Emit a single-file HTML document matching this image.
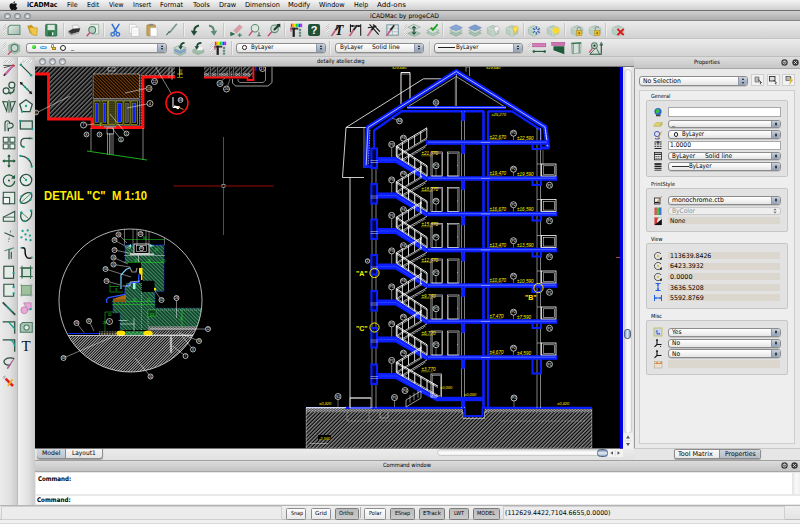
<!DOCTYPE html>
<html><head><meta charset="utf-8"><title>iCADMac</title>
<style>
*{box-sizing:border-box;margin:0;padding:0}
html,body{width:800px;height:524px;overflow:hidden;background:#e6e6e6;font-family:"Liberation Sans","DejaVu Sans",sans-serif;}
.abs{position:absolute}
.t{position:absolute;white-space:nowrap;color:#000;line-height:1}
#menubar{left:0;top:0;width:800px;height:11px;background:linear-gradient(#f4f4f4,#e2e2e2 50%,#cfcfcf);border-bottom:1px solid #6e6e6e}
#titlebar{left:0;top:11px;width:800px;height:10px;background:linear-gradient(#cfcfcf,#adadad);border-bottom:1px solid #858585}
.tb{left:0;width:800px;background:linear-gradient(#ececec,#dcdcdc 60%,#d2d2d2);}
.light{position:absolute;width:6.600px;height:6.600px;border-radius:50%;background:radial-gradient(circle at 50% 75%,#f4f6f8,#b9bfc6 60%,#8f959c);border:0.5px solid #80868d}
.combo{position:absolute;height:9px;border-radius:3px;background:linear-gradient(#fff,#f3f3f3 50%,#e4e4e4);border:0.5px solid #8c8c8c;box-shadow:0 0.5px 0.5px rgba(0,0,0,.25)}
.stepper{position:absolute;right:0;top:0;bottom:0;width:9px;border-radius:0 3px 3px 0;background:linear-gradient(#c9d1dd,#a9b6c8 50%,#93a3ba);border-left:0.4px solid #8d98a8;}
.stepper:before{content:"";position:absolute;left:3px;top:1.5px;border:1.5px solid transparent;border-bottom:2px solid #111;border-top:0}
.stepper:after{content:"";position:absolute;left:3px;bottom:1.5px;border:1.5px solid transparent;border-top:2px solid #111;border-bottom:0}
.sep{position:absolute;width:0.7px;background:#c6c6c6;box-shadow:0.7px 0 0 #f4f4f4}
.grip{position:absolute;width:3px;background:repeating-linear-gradient(135deg,#c4c4c4 0 0.7px,#ececec 0.7px 1.6px)}
.field{position:absolute;background:#dbd7cf;height:7px}
.wfield{position:absolute;background:#fff;height:8px;border:0.5px solid #a8a8a8}
.group{position:absolute;border:0.5px solid #c6c6c6;background:#e2e2e2;border-radius:2px}
.btn{position:absolute;height:12px;top:507.5px;border:0.5px solid #8e8e8e;border-radius:1.5px;background:linear-gradient(#fdfdfd,#e9e9e9);font-size:5.6px;text-align:center;line-height:10.5px;color:#111}
.btn.on{background:linear-gradient(#bcbcbc,#cacaca);border-color:#7c7c7c}
</style></head>
<body>
<div id="menubar" class="abs"></div>
<svg class="abs" style="left:9px;top:0.5px" width="9" height="10" viewBox="0 0 18 20"><path d="M12.2 0.3c0.2 1.9-1.6 4.1-3.6 3.9C8.300 2.300 10.200 0.500 12.200 0.300zM9 5.300c1 0 2-0.900 3.700-0.800 1.300 0.100 2.700 0.700 3.600 2-3 1.800-2.500 6 0.600 7.200-0.700 1.800-2.300 4.600-4.200 4.600-1.200 0-1.800-0.800-3.300-0.800-1.600 0-2.100 0.800-3.300 0.800C3.800 18.300 1 13.200 1 9.800c0-3.400 2.200-5.300 4.300-5.300 1.500 0 2.600 0.800 3.700 0.800z" fill="#111"/></svg>
<span class="t " style="left:27px;top:2.2px;font-size:6.85px;transform:scaleX(0.901);transform-origin:0 0;font-family:'DejaVu Sans','Liberation Sans',sans-serif;font-weight:bold;">iCADMac</span>
<span class="t " style="left:66.8px;top:2.2px;font-size:6.85px;transform:scaleX(0.934);transform-origin:0 0;font-family:'DejaVu Sans','Liberation Sans',sans-serif;">File</span>
<span class="t " style="left:86.8px;top:2.2px;font-size:6.85px;transform:scaleX(0.920);transform-origin:0 0;font-family:'DejaVu Sans','Liberation Sans',sans-serif;">Edit</span>
<span class="t " style="left:108.8px;top:2.2px;font-size:6.85px;transform:scaleX(0.892);transform-origin:0 0;font-family:'DejaVu Sans','Liberation Sans',sans-serif;">View</span>
<span class="t " style="left:132.5px;top:2.2px;font-size:6.85px;transform:scaleX(0.932);transform-origin:0 0;font-family:'DejaVu Sans','Liberation Sans',sans-serif;">Insert</span>
<span class="t " style="left:160px;top:2.2px;font-size:6.85px;transform:scaleX(0.953);transform-origin:0 0;font-family:'DejaVu Sans','Liberation Sans',sans-serif;">Format</span>
<span class="t " style="left:192.5px;top:2.2px;font-size:6.85px;transform:scaleX(0.996);transform-origin:0 0;font-family:'DejaVu Sans','Liberation Sans',sans-serif;">Tools</span>
<span class="t " style="left:218.8px;top:2.2px;font-size:6.85px;transform:scaleX(0.951);transform-origin:0 0;font-family:'DejaVu Sans','Liberation Sans',sans-serif;">Draw</span>
<span class="t " style="left:244.5px;top:2.2px;font-size:6.85px;transform:scaleX(0.956);transform-origin:0 0;font-family:'DejaVu Sans','Liberation Sans',sans-serif;">Dimension</span>
<span class="t " style="left:288.3px;top:2.2px;font-size:6.85px;transform:scaleX(0.979);transform-origin:0 0;font-family:'DejaVu Sans','Liberation Sans',sans-serif;">Modify</span>
<span class="t " style="left:319.3px;top:2.2px;font-size:6.85px;transform:scaleX(0.952);transform-origin:0 0;font-family:'DejaVu Sans','Liberation Sans',sans-serif;">Window</span>
<span class="t " style="left:353.8px;top:2.2px;font-size:6.85px;transform:scaleX(0.910);transform-origin:0 0;font-family:'DejaVu Sans','Liberation Sans',sans-serif;">Help</span>
<span class="t " style="left:377px;top:2.2px;font-size:6.85px;transform:scaleX(1.031);transform-origin:0 0;font-family:'DejaVu Sans','Liberation Sans',sans-serif;">Add-ons</span>
<div id="titlebar" class="abs"></div>
<div class="light" style="left:4.2px;top:12.6px"></div>
<div class="light" style="left:14.1px;top:12.6px"></div>
<div class="light" style="left:24px;top:12.6px"></div>
<span class="t " style="left:370px;top:12.9px;font-size:6.3px;transform:scaleX(0.965);transform-origin:0 0;font-family:'DejaVu Sans','Liberation Sans',sans-serif">iCADMac by progeCAD</span>
<div class="abs tb" style="top:21px;height:18px;border-bottom:1px solid #c2c2c2"></div>
<div class="abs tb" style="top:39px;height:17.500px;border-bottom:1px solid #bdbdbd"></div>
<svg class="abs" style="left:5.8px;top:21.8px" width="16.0" height="16.0" viewBox="0 0 14 14"><defs><linearGradient id="gn" x1="0" y1="0" x2="1" y2="1"><stop offset="0" stop-color="#e4ede8"/><stop offset="1" stop-color="#9fb9ab"/></linearGradient></defs><path d="M3.800 2.800H12.200V11H1.800V4.800z" fill="url(#gn)" stroke="#5d8a73" stroke-width="0.9" stroke-linejoin="round"/></svg>
<svg class="abs" style="left:24.5px;top:21.8px" width="16.0" height="16.0" viewBox="0 0 14 14"><path d="M2 3.500L5.500 2.500L7 4L8 10.500L4.300 9.800z" fill="#c99a22"/><path d="M3.300 4.500L10.800 5.200L10.300 12L6 11z" fill="#f0c64a" stroke="#b98d1e" stroke-width="0.5"/><path d="M3.300 4.500L2.800 3.200" stroke="#b98d1e" stroke-width=".6"/></svg>
<svg class="abs" style="left:43.2px;top:21.8px" width="16.0" height="16.0" viewBox="0 0 14 14"><rect x="2.300" y="2" width="9.800" height="10.300" rx="0.8" fill="#3f8a5c" stroke="#1f5a3a" stroke-width="0.6"/><rect x="4" y="2.500" width="6.300" height="4.500" fill="#d9e7de"/><rect x="4.500" y="8.300" width="5" height="4" fill="#2a6a46"/><rect x="7.800" y="9" width="1.300" height="2.600" fill="#dfe"/></svg>
<svg class="abs" style="left:66.0px;top:21.8px" width="16.0" height="16.0" viewBox="0 0 14 14"><path d="M5.500 3L10.500 2.500L12 5.500L6 6.500z" fill="#f4f4f4" stroke="#999" stroke-width="0.4"/><path d="M2 8L6 6L12.500 5.500L11.500 8.500L5 10.500z" fill="#333"/><path d="M2 8L5 10.500L5 11.800L2 9.300z" fill="#777"/><path d="M5 10.500L11.500 8.500L11.500 9.800L5 11.800z" fill="#aaa"/></svg>
<svg class="abs" style="left:84.6px;top:21.8px" width="16.0" height="16.0" viewBox="0 0 14 14"><path d="M4.500 2H12V10.500H6" fill="#e8efe9" stroke="#8aa898" stroke-width="0.7"/><circle cx="6.300" cy="7" r="3" fill="#b7d0c0" stroke="#4d7a63" stroke-width="0.9"/><path d="M4.200 9.300L1.800 12" stroke="#c0507a" stroke-width="1.300" stroke-linecap="round"/></svg>
<svg class="abs" style="left:107.4px;top:21.8px" width="16.0" height="16.0" viewBox="0 0 14 14"><path d="M4.500 2L8.500 9M10.500 2L6 9" stroke="#2d6fd0" stroke-width="1.300" stroke-linecap="round"/><circle cx="5" cy="10.800" r="1.600" fill="none" stroke="#2d6fd0" stroke-width="1.100"/><circle cx="9.500" cy="10.800" r="1.600" fill="none" stroke="#2d6fd0" stroke-width="1.100"/></svg>
<svg class="abs" style="left:126.0px;top:21.8px" width="16.0" height="16.0" viewBox="0 0 14 14"><path d="M3 2H8L9 3V10H3z" fill="#fbfbfb" stroke="#b5b5b5" stroke-width="0.5"/><path d="M5 4.500H10.200L11.300 5.600V12.500H5z" fill="#fff" stroke="#b5b5b5" stroke-width="0.5"/><path d="M6 7H10M6 8.500H10M6 10H10" stroke="#dde4ee" stroke-width=".5"/></svg>
<svg class="abs" style="left:144.3px;top:21.8px" width="16.0" height="16.0" viewBox="0 0 14 14"><rect x="2.500" y="2.500" width="7.500" height="9.500" rx="0.6" fill="#c9a24e" stroke="#9b7a2e" stroke-width="0.5"/><rect x="4.500" y="1.600" width="3.500" height="1.800" fill="#8a8a8a"/><path d="M5.500 5H10.500L11.500 6V12.500H5.500z" fill="#fff" stroke="#b5b5b5" stroke-width="0.5"/></svg>
<svg class="abs" style="left:163.0px;top:21.8px" width="16.0" height="16.0" viewBox="0 0 14 14"><path d="M11.800 2L6 9" stroke="#7a9a88" stroke-width="1.500" stroke-linecap="round"/><path d="M6.300 8.300L3 12L2.800 11L5.300 7.800z" fill="#3f6a53"/></svg>
<svg class="abs" style="left:186.5px;top:21.8px" width="16.0" height="16.0" viewBox="0 0 14 14"><g><path d="M10.500 3C7.500 3.500 6 6 6.300 9" fill="none" stroke="#1f4a36" stroke-width="1.800"/><path d="M3.300 7.500L9 8L6 12z" fill="#1f4a36"/></g></svg>
<svg class="abs" style="left:205.0px;top:21.8px" width="16.0" height="16.0" viewBox="0 0 14 14"><g transform="translate(14 0) scale(-1 1)"><path d="M10.500 3C7.500 3.500 6 6 6.300 9" fill="none" stroke="#5d8a73" stroke-width="1.800"/><path d="M3.300 7.500L9 8L6 12z" fill="#5d8a73"/></g></svg>
<svg class="abs" style="left:228.0px;top:21.8px" width="16.0" height="16.0" viewBox="0 0 14 14"><path d="M5 7.500L10 2.500L12.500 4.500L7.500 9.800z" fill="#d9a0a8" stroke="#c08890" stroke-width="0.4"/><path d="M2 8.500L6.500 10.500L2 12.500z" fill="#2a6a46"/><path d="M8.500 11.500H12M10.200 9.800V13.200" stroke="#3f8a5c" stroke-width="1.100"/></svg>
<svg class="abs" style="left:247.0px;top:21.8px" width="16.0" height="16.0" viewBox="0 0 14 14"><circle cx="7" cy="5.500" r="3.300" fill="#dbe8e0" stroke="#5d8a73" stroke-width="0.9"/><path d="M4.700 8L2 11.500" stroke="#c0507a" stroke-width="1.300" stroke-linecap="round"/><path d="M10.500 9V12M9 12H12" stroke="#3f6a53" stroke-width="0.9"/></svg>
<svg class="abs" style="left:265.6px;top:21.8px" width="16.0" height="16.0" viewBox="0 0 14 14"><circle cx="7.500" cy="6" r="3.300" fill="#c8dad0" stroke="#5d8a73" stroke-width="0.9"/><path d="M5 8.500L2 12" stroke="#c0507a" stroke-width="1.300" stroke-linecap="round"/><path d="M7 7L11.500 2.500" stroke="#1f3a2c" stroke-width="1.800"/><path d="M12.500 1.500L12.500 5L9 2z" fill="#1f3a2c"/></svg>
<svg class="abs" style="left:287.5px;top:21.8px" width="16.0" height="16.0" viewBox="0 0 14 14"><rect x="2.5" y="1.500" width="1.500" height="3" fill="#ff2020"/><rect x="3.9" y="1.500" width="1.500" height="3" fill="#ffb000"/><rect x="5.3" y="1.500" width="1.500" height="3" fill="#f0f000"/><rect x="6.7" y="1.500" width="1.500" height="3" fill="#20d020"/><rect x="8.1" y="1.500" width="1.500" height="3" fill="#20c0f0"/><rect x="9.5" y="1.500" width="1.500" height="3" fill="#3030ff"/><rect x="10.9" y="1.500" width="1.500" height="3" fill="#c020e0"/><rect x="2" y="5" width="7" height="1.600" fill="#333"/><rect x="4" y="5" width="2" height="8" fill="#222"/><rect x="2" y="5" width="1.200" height="3.500" fill="#c06080"/><rect x="9.500" y="6" width="2" height="1.800" fill="#5d8a73"/><rect x="9.500" y="8.500" width="2" height="1.800" fill="#5d8a73"/><rect x="9.500" y="11" width="2" height="1.800" fill="#5d8a73"/></svg>
<svg class="abs" style="left:306.0px;top:21.8px" width="16.0" height="16.0" viewBox="0 0 14 14"><rect x="1.800" y="1.800" width="10.500" height="10.500" rx="1.800" fill="#1f5238"/><text x="7" y="10.800" font-size="9.500" font-weight="bold" fill="#fff" text-anchor="middle" font-family="Liberation Sans, sans-serif">?</text></svg>
<svg class="abs" style="left:329.0px;top:21.8px" width="16.0" height="16.0" viewBox="0 0 14 14"><text x="9" y="11.500" font-size="12" font-style="italic" font-weight="bold" fill="#111" text-anchor="middle" font-family="Liberation Serif, serif">T</text><path d="M1.500 12L5 6.500L6.500 7.500L3 12.500z" fill="#c06088"/><path d="M5 6.500L8.500 2.500L9.500 3.300L6.500 7.500z" fill="#222"/></svg>
<svg class="abs" style="left:347.0px;top:21.8px" width="16.0" height="16.0" viewBox="0 0 14 14"><path d="M3 2V9M12 2V12M3 3.500H12" stroke="#111" stroke-width="0.9" fill="none"/><path d="M3 3.500L5.500 2.500V4.500zM12 3.500L9.500 2.500V4.500z" fill="#111"/><path d="M1.500 12L5 6.500L6.500 7.500L3 12.500z" fill="#c06088"/><path d="M5 6.500L8.500 2.500L9.500 3.300L6.500 7.500z" fill="#222"/></svg>
<svg class="abs" style="left:365.0px;top:21.8px" width="16.0" height="16.0" viewBox="0 0 14 14"><path d="M4 2L12 11M7 2L13 8.500M2.500 5L10 4" stroke="#111" stroke-width="0.9"/><path d="M1.500 12L5 6.500L6.500 7.500L3 12.500z" fill="#c06088"/><path d="M5 6.500L8.500 2.500L9.500 3.300L6.500 7.500z" fill="#222"/></svg>
<svg class="abs" style="left:383.5px;top:21.8px" width="16.0" height="16.0" viewBox="0 0 14 14"><rect x="2.500" y="2.500" width="10" height="9" fill="#e3ebe6" stroke="#6d8a9a" stroke-width="0.8"/><path d="M2.500 5.500H12.500M2.500 8.500H12.500M7.500 5.500V11.500" stroke="#9ab" stroke-width=".5"/><path d="M1.500 12L5 6.500L6.500 7.500L3 12.500z" fill="#c06088"/><path d="M5 6.500L8.500 2.500L9.500 3.300L6.500 7.500z" fill="#222"/></svg>
<svg class="abs" style="left:406.0px;top:21.8px" width="16.0" height="16.0" viewBox="0 0 14 14"><path d="M7 1.9L12.500 4.5L7 7.1L1.500 4.5z" fill="#c9dbd0" stroke="#7fa08f" stroke-width="0.5" opacity="1"/><path d="M7 7.4L12.500 10L7 12.6L1.500 10z" fill="#a9c4b5" stroke="#7fa08f" stroke-width="0.5" opacity="1"/><path d="M7 4V10.500M5.500 5.500L7 4L8.500 5.500M5.500 9L7 10.500L8.500 9" stroke="#1f4a36" stroke-width="0.9" fill="none"/></svg>
<svg class="abs" style="left:425.0px;top:21.8px" width="16.0" height="16.0" viewBox="0 0 14 14"><path d="M7 6.9L12.500 9.5L7 12.1L1.500 9.5z" fill="#b9cfc2" stroke="#7fa08f" stroke-width="0.5" opacity="1"/><path d="M7 4.9L12.500 7.5L7 10.1L1.500 7.5z" fill="#d5e3da" stroke="#7fa08f" stroke-width="0.5" opacity="1"/><path d="M5 5L7 7L11 2" stroke="#18a018" stroke-width="1.600" fill="none"/></svg>
<svg class="abs" style="left:448.0px;top:21.8px" width="16.0" height="16.0" viewBox="0 0 14 14"><path d="M7 7.200000000000001L12.500 9.8L7 12.4L1.500 9.8z" fill="#a9c4b5" stroke="#7fa08f" stroke-width="0.5" opacity="1"/><path d="M7 4.9L12.500 7.5L7 10.1L1.500 7.5z" fill="#c9dbd0" stroke="#7fa08f" stroke-width="0.5" opacity="1"/><path d="M7 2.4L12.500 5L7 7.6L1.500 5z" fill="#8aa6d8" stroke="#6080c0" stroke-width="0.5" opacity="1"/></svg>
<svg class="abs" style="left:466.5px;top:21.8px" width="16.0" height="16.0" viewBox="0 0 14 14"><path d="M7 7.200000000000001L12.500 9.8L7 12.4L1.500 9.8z" fill="#a9c4b5" stroke="#7fa08f" stroke-width="0.5" opacity="1"/><path d="M7 4.9L12.500 7.5L7 10.1L1.500 7.5z" fill="#c9dbd0" stroke="#7fa08f" stroke-width="0.5" opacity="1"/><path d="M7 2.4L12.500 5L7 7.6L1.500 5z" fill="#7f9ccf" stroke="#6080c0" stroke-width="0.5" opacity="1"/></svg>
<svg class="abs" style="left:485.0px;top:21.8px" width="16.0" height="16.0" viewBox="0 0 14 14"><path d="M2 5L7 3L12 5V10L7 12.500L2 10z" fill="#b9cfc2" stroke="#8fae9e" stroke-width="0.4"/><path d="M2 5L7 7L12 5M7 7V12.500" stroke="#dfeae4" stroke-width="0.5" fill="none"/><path d="M8.500 4.500a2.200 2.200 0 1 1 2 3.500v2h-1.600v-2a2.200 2.200 0 0 1-.4-3.500z" fill="#f2f2f2" stroke="#999" stroke-width="0.4"/></svg>
<svg class="abs" style="left:503.5px;top:21.8px" width="16.0" height="16.0" viewBox="0 0 14 14"><path d="M2 5L7 3L12 5V10L7 12.500L2 10z" fill="#b9cfc2" stroke="#8fae9e" stroke-width="0.4"/><path d="M2 5L7 7L12 5M7 7V12.500" stroke="#dfeae4" stroke-width="0.5" fill="none"/><path d="M8.500 4.500a2.200 2.200 0 1 1 2 3.500v2h-1.600v-2a2.200 2.200 0 0 1-.4-3.500z" fill="#ffe24a" stroke="#c9a21e" stroke-width="0.4"/></svg>
<svg class="abs" style="left:526.0px;top:21.8px" width="16.0" height="16.0" viewBox="0 0 14 14"><path d="M2 5L7 3L12 5V10L7 12.500L2 10z" fill="#b9cfc2" stroke="#8fae9e" stroke-width="0.4"/><path d="M2 5L7 7L12 5M7 7V12.500" stroke="#dfeae4" stroke-width="0.5" fill="none"/><path d="M9 4V11M6 5.700L12 9.300M12 5.700L6 9.300" stroke="#2a50b0" stroke-width="0.9"/><circle cx="9" cy="7.500" r="1.200" fill="#dfe8ff"/></svg>
<svg class="abs" style="left:545.0px;top:21.8px" width="16.0" height="16.0" viewBox="0 0 14 14"><path d="M2 5L7 3L12 5V10L7 12.500L2 10z" fill="#b9cfc2" stroke="#8fae9e" stroke-width="0.4"/><path d="M2 5L7 7L12 5M7 7V12.500" stroke="#dfeae4" stroke-width="0.5" fill="none"/><circle cx="9.500" cy="7.500" r="2.600" fill="#ffd92a"/><path d="M9.500 3.500V11.500M5.500 7.500H13.500M6.700 4.700L12.300 10.300M12.300 4.700L6.700 10.300" stroke="#ffd92a" stroke-width="0.7"/></svg>
<svg class="abs" style="left:568.5px;top:21.8px" width="16.0" height="16.0" viewBox="0 0 14 14"><path d="M2 5L7 3L12 5V10L7 12.500L2 10z" fill="#b9cfc2" stroke="#8fae9e" stroke-width="0.4"/><path d="M2 5L7 7L12 5M7 7V12.500" stroke="#dfeae4" stroke-width="0.5" fill="none"/><path d="M7.300 7.500V6a1.500 1.500 0 0 1 3 0V7.500" fill="none" stroke="#8a8a8a" stroke-width="0.8"/><rect x="6.500" y="7.500" width="4.800" height="4.300" fill="#e9b92a" stroke="#a8861c" stroke-width="0.4"/><rect x="8.400" y="9" width="1" height="1.500" fill="#6a4a00"/></svg>
<svg class="abs" style="left:587.0px;top:21.8px" width="16.0" height="16.0" viewBox="0 0 14 14"><path d="M2 5L7 3L12 5V10L7 12.500L2 10z" fill="#b9cfc2" stroke="#8fae9e" stroke-width="0.4"/><path d="M2 5L7 7L12 5M7 7V12.500" stroke="#dfeae4" stroke-width="0.5" fill="none"/><path d="M7.300 7.500V5.500a1.500 1.500 0 0 1 3 0" fill="none" stroke="#8a8a8a" stroke-width="0.8"/><rect x="6.500" y="7.500" width="4.800" height="4.300" fill="#e9b92a" stroke="#a8861c" stroke-width="0.4"/><rect x="8.400" y="9" width="1" height="1.500" fill="#6a4a00"/></svg>
<svg class="abs" style="left:610.0px;top:21.8px" width="16.0" height="16.0" viewBox="0 0 14 14"><path d="M2 5L7 3L12 5V10L7 12.500L2 10z" fill="#b9cfc2" stroke="#8fae9e" stroke-width="0.4"/><path d="M2 5L7 7L12 5M7 7V12.500" stroke="#dfeae4" stroke-width="0.5" fill="none"/><path d="M6.500 6L12 11.500M12 6L6.500 11.500" stroke="#e01818" stroke-width="1.800"/></svg>
<svg class="abs" style="left:5.8px;top:39.6px" width="16.0" height="16.0" viewBox="0 0 14 14"><path d="M2.500 4.500L7.500 2.500L12 4.500V10L7.500 12L2.500 10z" fill="#a9c4b5" stroke="#7fa08f" stroke-width="0.5"/><circle cx="7.500" cy="7" r="3" fill="#c9dbd0" stroke="#4d7a63" stroke-width="0.9"/><path d="M5.200 9.300L2 12.500" stroke="#c0507a" stroke-width="1.200" stroke-linecap="round"/></svg>
<svg class="abs" style="left:171.6px;top:39.6px" width="16.0" height="16.0" viewBox="0 0 14 14"><path d="M7 8.4L12.500 11L7 13.6L1.500 11z" fill="#a9c4b5" stroke="#7fa08f" stroke-width="0.5" opacity="1"/><path d="M7 6.4L12.500 9L7 11.6L1.500 9z" fill="#8aa6d8" stroke="#6080c0" stroke-width="0.5" opacity="1"/><path d="M7 4.4L12.500 7L7 9.6L1.500 7z" fill="#c9dbd0" stroke="#7fa08f" stroke-width="0.5" opacity="1"/><path d="M11 2.500C8.500 2.500 7.500 4 7.500 6.500" fill="none" stroke="#1f4a36" stroke-width="1.500"/><path d="M5.500 5.500L9.500 5.500L7.500 8.500z" fill="#1f4a36"/></svg>
<svg class="abs" style="left:190.3px;top:39.6px" width="16.0" height="16.0" viewBox="0 0 14 14"><path d="M2.500 8.500L7 7L12 8.500V11L7 12.800L2.500 11z" fill="#9fbcab" stroke="#7fa08f" stroke-width="0.4"/><path d="M6 6H11V9H6z" fill="#f4f4f4"/><path d="M10 2.500C7.500 2.500 6 4 6 6.500" fill="none" stroke="#1f4a36" stroke-width="1.500"/><path d="M4 5.500L8 5.500L6 8.500z" fill="#1f4a36"/></svg>
<svg class="abs" style="left:212.0px;top:39.6px" width="16.0" height="16.0" viewBox="0 0 14 14"><rect x="2.5" y="1.500" width="1.500" height="3" fill="#ff2020"/><rect x="3.9" y="1.500" width="1.500" height="3" fill="#ffb000"/><rect x="5.3" y="1.500" width="1.500" height="3" fill="#f0f000"/><rect x="6.7" y="1.500" width="1.500" height="3" fill="#20d020"/><rect x="8.1" y="1.500" width="1.500" height="3" fill="#20c0f0"/><rect x="9.5" y="1.500" width="1.500" height="3" fill="#3030ff"/><rect x="10.9" y="1.500" width="1.500" height="3" fill="#c020e0"/><rect x="2" y="5" width="7" height="1.600" fill="#333"/><rect x="4" y="5" width="2" height="8" fill="#222"/><rect x="2" y="5" width="1.200" height="3.500" fill="#c06080"/><rect x="9.500" y="6" width="2" height="1.800" fill="#5d8a73"/><rect x="9.500" y="8.500" width="2" height="1.800" fill="#5d8a73"/><rect x="9.500" y="11" width="2" height="1.800" fill="#5d8a73"/></svg>
<svg class="abs" style="left:531.0px;top:39.6px" width="16.0" height="16.0" viewBox="0 0 14 14"><rect x="1.500" y="3" width="11.500" height="3" fill="#d070b0" stroke="#a04888" stroke-width="0.4"/><path d="M2 4.500H12.500" stroke="#f0c0e0" stroke-width=".5" stroke-dasharray="1 .6"/><path d="M2.500 10H12" stroke="#1f5a3a" stroke-width="1"/><circle cx="2.500" cy="10" r="1.100" fill="#1f5a3a"/><circle cx="12" cy="10" r="1.100" fill="#1f5a3a"/></svg>
<svg class="abs" style="left:550.0px;top:39.6px" width="16.0" height="16.0" viewBox="0 0 14 14"><rect x="1.500" y="2" width="11.500" height="2.800" fill="#d070b0" stroke="#a04888" stroke-width="0.4"/><path d="M3 5.500H12.500V12.500L3 9z" fill="#1f5a3a"/></svg>
<svg class="abs" style="left:567.7px;top:39.6px" width="16.0" height="16.0" viewBox="0 0 14 14"><path d="M3 3L11.500 2.500L11 11.500L3.500 12z" fill="#d5e0da" stroke="#7fa08f" stroke-width="0.6"/><path d="M4.500 3V12M9.800 2.800V11.500" stroke="#4d7a63" stroke-width=".8"/><path d="M3 3L11.500 2.500" stroke="#2a6a46" stroke-width="1.200"/></svg>
<svg class="abs" style="left:586.5px;top:39.6px" width="16.0" height="16.0" viewBox="0 0 14 14"><path d="M2.500 12.500H12.500V3.500" fill="none" stroke="#1f5a3a" stroke-width="1"/><path d="M12.500 2L11.300 4.500H13.700zM2.500 12.500L8 6.500L11 12.500" stroke="#1f5a3a" stroke-width=".7" fill="none"/><circle cx="6.500" cy="5" r="2.500" fill="#c9dbd0" stroke="#4d7a63" stroke-width=".9"/><circle cx="6.500" cy="5" r="1" fill="#1f3a2c"/><path d="M4.800 7L2 11" stroke="#c0507a" stroke-width="1.100"/></svg>
<div class="sep" style="left:62.6px;top:23px;height:14px"></div>
<div class="sep" style="left:103.3px;top:23px;height:14px"></div>
<div class="sep" style="left:183px;top:23px;height:14px"></div>
<div class="sep" style="left:223px;top:23px;height:14px"></div>
<div class="sep" style="left:284px;top:23px;height:14px"></div>
<div class="sep" style="left:441.6px;top:23px;height:14px"></div>
<div class="sep" style="left:523px;top:23px;height:14px"></div>
<div class="sep" style="left:564px;top:23px;height:14px"></div>
<div class="sep" style="left:605px;top:23px;height:14px"></div>
<div class="sep" style="left:231px;top:41px;height:14px"></div>
<div class="sep" style="left:328.5px;top:41px;height:14px"></div>
<div class="sep" style="left:429px;top:41px;height:14px"></div>
<div class="grip" style="left:2.5px;top:24px;height:12px"></div>
<div class="grip" style="left:325.5px;top:24px;height:12px"></div>
<div class="grip" style="left:403.5px;top:24px;height:12px"></div>
<div class="grip" style="left:2.5px;top:42px;height:12px"></div>
<div class="grip" style="left:210px;top:42px;height:12px"></div>
<div class="grip" style="left:528px;top:42px;height:12px"></div>
<div class="combo" style="left:25.8px;top:42.8px;width:141.7px;height:10px"><div class="stepper"></div></div>
<div class="combo" style="left:236px;top:42.8px;width:90px;height:10px"><div class="stepper"></div></div>
<div class="combo" style="left:335.4px;top:42.8px;width:88.6px;height:10px"><div class="stepper"></div></div>
<div class="combo" style="left:434px;top:42.8px;width:89px;height:10px"><div class="stepper"></div></div>
<div class="abs" style="left:31.5px;top:45.3px;width:4px;height:4px;border-radius:50%;background:radial-gradient(circle at 40% 35%,#7dff6a,#17c010 60%,#0a8a06)"></div>
<div class="abs" style="left:40px;top:46px;width:7px;height:3.2px;border-radius:50%;border:0.8px solid #4aa3e8;background:#d9eefc"></div>
<div class="abs" style="left:52px;top:46.5px;width:4px;height:3.300px;background:#e8c23c;border:0.4px solid #a8861c"></div><div class="abs" style="left:50.5px;top:44.3px;width:3.500px;height:3.500px;border:0.7px solid #8a8a8a;border-bottom:0;border-radius:2px 2px 0 0"></div>
<div class="abs" style="left:59.5px;top:44.5px;width:6px;height:6px;border-radius:50%;border:0.8px solid #222;background:#fff"></div>
<span class="t " style="left:71px;top:43.6px;font-size:6px;font-family:'DejaVu Sans','Liberation Sans',sans-serif">_</span>
<div class="abs" style="left:242px;top:45px;width:4.500px;height:4.500px;border-radius:50%;border:0.6px solid #222;background:#fff"></div>
<span class="t " style="left:250.9px;top:44px;font-size:6.3px;transform:scaleX(0.875);transform-origin:0 0;font-family:'DejaVu Sans','Liberation Sans',sans-serif">ByLayer</span>
<span class="t " style="left:339.5px;top:44px;font-size:6.3px;transform:scaleX(0.898);transform-origin:0 0;font-family:'DejaVu Sans','Liberation Sans',sans-serif">ByLayer</span>
<span class="t " style="left:372.3px;top:44px;font-size:6.3px;transform:scaleX(0.968);transform-origin:0 0;font-family:'DejaVu Sans','Liberation Sans',sans-serif">Solid line</span>
<div class="abs" style="left:438px;top:47.2px;width:17px;height:0.7px;background:#222"></div>
<span class="t " style="left:455.8px;top:44px;font-size:6.3px;transform:scaleX(0.875);transform-origin:0 0;font-family:'DejaVu Sans','Liberation Sans',sans-serif">ByLayer</span>
<div class="abs" style="left:0;top:56.5px;width:17.500px;height:449px;background:linear-gradient(90deg,#ebebeb,#e1e1e1 55%,#c8c8c8)"></div>
<div class="abs" style="left:17.500px;top:56.5px;width:17.500px;height:449px;background:linear-gradient(90deg,#f2f2f2,#e3e3e3 55%,#cbcbcb)"></div>
<div class="abs" style="left:17px;top:56.5px;width:0.7px;height:449px;background:#bcbcbc"></div>
<div class="abs" style="left:3px;top:59.5px;width:11px;height:3px;background:repeating-linear-gradient(135deg,#c8c8c8 0 0.7px,#eee 0.7px 1.700px)"></div>
<div class="abs" style="left:21px;top:59.5px;width:11px;height:3px;background:repeating-linear-gradient(135deg,#c8c8c8 0 0.7px,#eee 0.7px 1.700px)"></div>
<svg class="abs" style="left:0.7px;top:61.6px" width="16.0" height="16.0" viewBox="0 0 14 14"><path d="M2 3H12M2.500 5L8 3.500" stroke="#333" stroke-width=".7"/><path d="M11.500 3L4 11.500L2.500 12L3 10.500L10.500 2.300z" fill="#d868b0" stroke="#7a3a68" stroke-width=".4"/><path d="M10 2.500L11.800 3.800" stroke="#e03030" stroke-width="1.200"/><path d="M2.500 12L3.800 10.300" stroke="#222" stroke-width="1"/></svg>
<svg class="abs" style="left:0.7px;top:80.0px" width="16.0" height="16.0" viewBox="0 0 14 14"><circle cx="4.500" cy="9.500" r="2.600" fill="#e4ece7" stroke="#2f4f40" stroke-width="1"/><circle cx="9.500" cy="4.500" r="2.600" fill="#e4ece7" stroke="#2f4f40" stroke-width="1"/><path d="M11.500 7.500C11.500 10.500 9.500 11.500 7.500 11.500" fill="none" stroke="#1f5a3a" stroke-width="1.200"/><path d="M6.500 11.500L8.500 10V13z" fill="#1f5a3a"/></svg>
<svg class="abs" style="left:0.7px;top:98.3px" width="16.0" height="16.0" viewBox="0 0 14 14"><path d="M1.500 3L6 3.500L5 11.500zM12.500 3L8 3.500L9 11.500z" fill="#d5e0da" stroke="#2f4f40" stroke-width=".9"/><path d="M7 1.500V13" stroke="#5d8a73" stroke-width="1.200"/></svg>
<svg class="abs" style="left:0.7px;top:116.7px" width="16.0" height="16.0" viewBox="0 0 14 14"><path d="M3.500 12.500V5.500C3.500 2.500 7.500 2.500 7.500 5.500C10.500 4.500 12 8.500 9 9.500C8 10 7.500 10 6.500 10V12.500" fill="#d5e0da" stroke="#2f4f40" stroke-width="1"/><path d="M5.500 12V6C5.500 5 6.500 5 6.500 6" fill="none" stroke="#5d8a73" stroke-width=".6"/></svg>
<svg class="abs" style="left:0.7px;top:135.0px" width="16.0" height="16.0" viewBox="0 0 14 14"><rect x="2" y="2" width="4.300" height="4.300" fill="#eef3f0" stroke="#2f4f40" stroke-width=".9"/><rect x="2" y="7.8" width="4.300" height="4.300" fill="#eef3f0" stroke="#2f4f40" stroke-width=".9"/><rect x="7.8" y="2" width="4.300" height="4.300" fill="#eef3f0" stroke="#2f4f40" stroke-width=".9"/><rect x="7.8" y="7.8" width="4.300" height="4.300" fill="#eef3f0" stroke="#2f4f40" stroke-width=".9"/></svg>
<svg class="abs" style="left:0.7px;top:153.4px" width="16.0" height="16.0" viewBox="0 0 14 14"><path d="M7 2V12M2 7H12" stroke="#1f5a3a" stroke-width="1.100"/><path d="M7 1L5.500 3.200H8.500zM7 13L5.500 10.800H8.500zM1 7L3.200 5.500V8.500zM13 7L10.800 5.500V8.500z" fill="#1f5a3a"/></svg>
<svg class="abs" style="left:0.7px;top:171.7px" width="16.0" height="16.0" viewBox="0 0 14 14"><path d="M11 4.500A5 5 0 1 0 12 8" fill="none" stroke="#1f5a3a" stroke-width="1.100"/><path d="M12.300 2.500V6H8.800z" fill="#1f5a3a"/><circle cx="7" cy="7.500" r=".9" fill="#1f5a3a"/></svg>
<svg class="abs" style="left:0.7px;top:190.1px" width="16.0" height="16.0" viewBox="0 0 14 14"><rect x="2" y="2" width="10" height="10" fill="#e4ece7" stroke="#2f4f40" stroke-width=".9"/><rect x="2" y="6.500" width="5.500" height="5.500" fill="#f6f8f7" stroke="#2f4f40" stroke-width=".9"/></svg>
<svg class="abs" style="left:0.7px;top:208.4px" width="16.0" height="16.0" viewBox="0 0 14 14"><path d="M2 8L12 3V11.500H2z" fill="#e4ece7" stroke="#2f4f40" stroke-width=".9"/><path d="M2 8H12" stroke="#2f4f40" stroke-width=".7"/></svg>
<svg class="abs" style="left:0.7px;top:226.8px" width="16.0" height="16.0" viewBox="0 0 14 14"><path d="M3 5L11.500 8.500" stroke="#2f4f40" stroke-width=".9"/><path d="M8.500 3L6.500 13" stroke="#5d8a73" stroke-width=".9" stroke-dasharray="2 1.2"/></svg>
<svg class="abs" style="left:0.7px;top:245.1px" width="16.0" height="16.0" viewBox="0 0 14 14"><path d="M3 5L11.500 2.500" stroke="#5d8a73" stroke-width=".9"/><path d="M7 4V12.500M9 6V12" stroke="#2f4f40" stroke-width="1"/><path d="M7 4L9 3.500" stroke="#18a090" stroke-width="1"/></svg>
<svg class="abs" style="left:0.7px;top:263.5px" width="16.0" height="16.0" viewBox="0 0 14 14"><rect x="2.500" y="2" width="8.500" height="10.500" fill="#e4ece7" stroke="#2f4f40" stroke-width="1"/><circle cx="11" cy="8" r="1" fill="#18a090"/></svg>
<svg class="abs" style="left:0.7px;top:281.8px" width="16.0" height="16.0" viewBox="0 0 14 14"><path d="M11 4.500V2H2.500V12.500H11V10" fill="#e4ece7" stroke="#2f4f40" stroke-width="1"/><circle cx="11" cy="4.5" r="1" fill="#18a090"/><circle cx="11" cy="10" r="1" fill="#18a090"/></svg>
<svg class="abs" style="left:0.7px;top:300.2px" width="16.0" height="16.0" viewBox="0 0 14 14"><path d="M1.500 2L12.500 13" stroke="#2f4f40" stroke-width="1.600"/><path d="M4.500 5L9.500 10" stroke="#18a090" stroke-width=".9"/></svg>
<svg class="abs" style="left:0.7px;top:318.5px" width="16.0" height="16.0" viewBox="0 0 14 14"><path d="M1.500 2.500H12V13" fill="none" stroke="#2f4f40" stroke-width="1.100"/><path d="M6.500 2.500L12 8.500" stroke="#18a090" stroke-width="1.200"/></svg>
<svg class="abs" style="left:0.7px;top:336.9px" width="16.0" height="16.0" viewBox="0 0 14 14"><path d="M1.500 2.500H12V13" fill="none" stroke="#2f4f40" stroke-width="1.100"/><path d="M7.500 2.500C10.500 3 11.500 5 12 8" fill="none" stroke="#18a090" stroke-width="1.200"/></svg>
<svg class="abs" style="left:0.7px;top:355.2px" width="16.0" height="16.0" viewBox="0 0 14 14"><path d="M8 9C3 9 1.500 6 3.500 4C5.500 2 10 2.500 11.500 3" fill="none" stroke="#2f4f40" stroke-width="1"/><path d="M11.500 3L6.500 11.500L5.500 12L5.700 10.800z" fill="#d868b0" stroke="#7a3a68" stroke-width=".4"/></svg>
<svg class="abs" style="left:0.7px;top:373.6px" width="16.0" height="16.0" viewBox="0 0 14 14"><path d="M4 4L10.500 10.500" stroke="#e02020" stroke-width="2.200"/><path d="M10 4.500L6 10.500" stroke="#f0b020" stroke-width="1.600"/><path d="M2 2L3 3M3.500 1.500V3M1.500 3.500H3" stroke="#5d8a73" stroke-width=".6"/></svg>
<svg class="abs" style="left:18.2px;top:61.6px" width="16.0" height="16.0" viewBox="0 0 14 14"><path d="M2.500 2.500L11.500 11.500" stroke="#2f4f40" stroke-width="1.100"/><circle cx="2.5" cy="2.5" r="1.1" fill="#18a090"/><circle cx="11.5" cy="11.5" r="1.1" fill="#18a090"/></svg>
<svg class="abs" style="left:18.2px;top:80.0px" width="16.0" height="16.0" viewBox="0 0 14 14"><path d="M3 3L11 11" stroke="#2f4f40" stroke-width="1.100"/><path d="M1.500 1.500L4.500 2.500L2.500 4.500zM12.500 12.500L9.500 11.500L11.500 9.500z" fill="#111"/><circle cx="6" cy="6" r="0.9" fill="#18a090"/><circle cx="8" cy="8" r="0.9" fill="#18a090"/></svg>
<svg class="abs" style="left:18.2px;top:98.3px" width="16.0" height="16.0" viewBox="0 0 14 14"><path d="M7 1.500L12.500 5.500L10.500 12H3.500L1.500 5.500z" fill="#e4ece7" stroke="#2f4f40" stroke-width="1.100"/><circle cx="7" cy="7" r="1" fill="#18a090"/><circle cx="3.5" cy="12" r="1" fill="#18a090"/></svg>
<svg class="abs" style="left:18.2px;top:116.7px" width="16.0" height="16.0" viewBox="0 0 14 14"><rect x="2" y="3.500" width="10.500" height="7" fill="#d5e0da" stroke="#2f4f40" stroke-width="1.100"/><circle cx="2" cy="3.5" r="1" fill="#18a090"/><circle cx="12.5" cy="10.5" r="1" fill="#18a090"/></svg>
<svg class="abs" style="left:18.2px;top:135.0px" width="16.0" height="16.0" viewBox="0 0 14 14"><path d="M12 3H6C1.500 3 1.500 10 5 10.500" fill="none" stroke="#2f4f40" stroke-width="1.100"/><path d="M12 3L9.500 2V4z" fill="#2f4f40"/><circle cx="12" cy="3" r="0.9" fill="#18a090"/><circle cx="5" cy="10.5" r="1" fill="#18a090"/></svg>
<svg class="abs" style="left:18.2px;top:153.4px" width="16.0" height="16.0" viewBox="0 0 14 14"><path d="M2 2.500C7 2.500 11.500 6 12 12" fill="none" stroke="#2f4f40" stroke-width="1.100"/><circle cx="2" cy="2.5" r="1" fill="#18a090"/><circle cx="9" cy="5.5" r="1" fill="#18a090"/><circle cx="12" cy="12" r="1" fill="#18a090"/></svg>
<svg class="abs" style="left:18.2px;top:171.7px" width="16.0" height="16.0" viewBox="0 0 14 14"><circle cx="7" cy="7" r="5" fill="#e4ece7" stroke="#2f4f40" stroke-width="1.100"/><path d="M7 7L4 4" stroke="#2f4f40" stroke-width=".7"/><circle cx="7" cy="7" r="1" fill="#18a090"/></svg>
<svg class="abs" style="left:18.2px;top:190.1px" width="16.0" height="16.0" viewBox="0 0 14 14"><ellipse cx="7" cy="7" rx="6" ry="3.600" transform="rotate(-40 7 7)" fill="#e4ece7" stroke="#2f4f40" stroke-width="1.100"/><path d="M2.500 11L11.500 3" stroke="#2f4f40" stroke-width=".6"/><circle cx="3" cy="5.5" r="1" fill="#18a090"/><circle cx="11" cy="8.5" r="1" fill="#18a090"/><circle cx="2.5" cy="11" r="1" fill="#18a090"/><circle cx="11.5" cy="3" r="1" fill="#18a090"/></svg>
<svg class="abs" style="left:18.2px;top:208.4px" width="16.0" height="16.0" viewBox="0 0 14 14"><path d="M3 4C1 9 4 13 8 11C11 9.500 13 5 11.500 2.500" fill="#e4ece7" stroke="#2f4f40" stroke-width="1.100"/><path d="M3 4L9 9" stroke="#2f4f40" stroke-width=".6"/><circle cx="3" cy="4" r="1.1" fill="#18a090"/><circle cx="11.5" cy="2.5" r="1.1" fill="#18a090"/><circle cx="5.5" cy="11.5" r="1" fill="#18a090"/></svg>
<svg class="abs" style="left:18.2px;top:226.8px" width="16.0" height="16.0" viewBox="0 0 14 14"><circle cx="4" cy="3.5" r="1" fill="#18a090"/><circle cx="8.5" cy="3" r="1" fill="#18a090"/><circle cx="6.5" cy="6.5" r="1" fill="#18a090"/><circle cx="3" cy="9" r="1" fill="#18a090"/><circle cx="10.5" cy="7.5" r="1" fill="#18a090"/><circle cx="7" cy="11" r="1" fill="#18a090"/><circle cx="11" cy="11.5" r="1" fill="#18a090"/></svg>
<svg class="abs" style="left:18.2px;top:245.1px" width="16.0" height="16.0" viewBox="0 0 14 14"><path d="M3 2.500C9 1.500 4 8 8 11C9.500 12 11 11.500 12 11" fill="none" stroke="#111" stroke-width="1.300"/><circle cx="3" cy="2.5" r="0.9" fill="#18a090"/><circle cx="12" cy="11" r="0.9" fill="#18a090"/></svg>
<svg class="abs" style="left:18.2px;top:263.5px" width="16.0" height="16.0" viewBox="0 0 14 14"><rect x="3.500" y="3.500" width="7.500" height="7.500" fill="#d5e0da" stroke="#2f4f40" stroke-width="1"/><path d="M1.500 3.500H13M1.500 11H13M3.500 1.500V13M11 1.500V13" stroke="#2a6a46" stroke-width=".8"/></svg>
<svg class="abs" style="left:18.2px;top:281.8px" width="16.0" height="16.0" viewBox="0 0 14 14"><rect x="3" y="3" width="8.500" height="8.500" fill="#9fc09a" stroke="#5d8a73" stroke-width=".8"/><path d="M1.500 3H13M1.500 11.500H13M3 1.500V13M11.500 1.500V13" stroke="#7fa08f" stroke-width=".5"/></svg>
<svg class="abs" style="left:18.2px;top:300.2px" width="16.0" height="16.0" viewBox="0 0 14 14"><path d="M5 2.500H11.500V8L8.500 9z" fill="#e8a8d8" stroke="#a868a0" stroke-width=".5"/><circle cx="5.500" cy="9" r="3" fill="#e8a8d8" stroke="#a868a0" stroke-width=".5"/><circle cx="11" cy="8" r="1" fill="#18a090"/></svg>
<svg class="abs" style="left:18.2px;top:318.5px" width="16.0" height="16.0" viewBox="0 0 14 14"><path d="M2 5L4 3H12.500V11.500H2z" fill="#a9c4b5" stroke="#4d7a63" stroke-width=".9"/><circle cx="7.500" cy="7.500" r="2.300" fill="#e4ece7" stroke="#4d7a63" stroke-width=".9"/></svg>
<svg class="abs" style="left:18.2px;top:336.9px" width="16.0" height="16.0" viewBox="0 0 14 14"><text x="7" y="12" font-size="13" fill="#111" text-anchor="middle" font-family="Liberation Serif, serif">T</text></svg>
<div class="abs" style="left:35px;top:56.5px;width:598.5px;height:10.500px;background:linear-gradient(#dcdcdc,#bcbcbc);border-bottom:0.5px solid #777"></div>
<div class="light" style="left:39.2px;top:58.1px"></div>
<div class="light" style="left:49.2px;top:58.1px"></div>
<div class="light" style="left:59.2px;top:58.1px"></div>
<span class="t " style="left:316.5px;top:58.9px;font-size:5.8px;transform:scaleX(0.887);transform-origin:0 0;font-family:'DejaVu Sans','Liberation Sans',sans-serif">detaily atelier.dwg</span>
<svg class="abs" style="left:35px;top:67px" width="588" height="381.500" viewBox="35 67 588 381.500" font-family="Liberation Sans, sans-serif" fill="none">
<defs>
<pattern id="hW" width="2.620" height="2.620" patternUnits="userSpaceOnUse" patternTransform="rotate(-45)"><rect width="2.620" height="2.620" fill="#000"/><rect width="2.620" height="1.450" fill="#858585"/></pattern>
<pattern id="hW2" width="3.100" height="3.100" patternUnits="userSpaceOnUse" patternTransform="rotate(-45)"><rect width="3.100" height="3.100" fill="#000"/><rect width="3.100" height="0.6" fill="#8c8c8c"/><rect y="1.100" width="3.100" height="0.6" fill="#8c8c8c"/></pattern>
<pattern id="hW3" width="1.940" height="1.940" patternUnits="userSpaceOnUse" patternTransform="rotate(-45)"><rect width="1.940" height="1.940" fill="#000"/><rect width="1.940" height="0.85" fill="#c6c6c6"/></pattern>
<pattern id="hB" width="2.400" height="2.400" patternUnits="userSpaceOnUse" patternTransform="rotate(45)"><rect width="2.400" height="2.400" fill="#000"/><rect width="2.400" height="1.150" fill="#7e3e08"/></pattern>
<pattern id="hG" width="2.600" height="2.600" patternUnits="userSpaceOnUse" patternTransform="rotate(45)"><rect width="2.600" height="2.600" fill="#123f2a"/><rect width="2.600" height="1" fill="#3f8f62"/></pattern>
<pattern id="grav" width="3" height="2" patternUnits="userSpaceOnUse"><rect width="3" height="2" fill="#5a5a5a"/><rect x="0.3" y="0.2" width="1" height="0.8" fill="#e8e8e8"/><rect x="1.800" y="1.100" width="0.9" height="0.7" fill="#cfcfcf"/></pattern>
<pattern id="dots" width="1.600" height="1.600" patternUnits="userSpaceOnUse"><rect width="1.600" height="1.600" fill="#222"/><rect width="0.8" height="0.8" fill="#d8d8a0"/></pattern>
<pattern id="dotsY" width="2" height="2" patternUnits="userSpaceOnUse"><rect width="2" height="2" fill="#111"/><circle cx="1" cy="1" r="0.550" fill="#e0e030"/></pattern>
<clipPath id="cc"><circle cx="130.5" cy="300.5" r="71.5"/></clipPath>
</defs>
<rect x="35" y="67" width="588" height="381.5" fill="#000" stroke="none" stroke-width="0.6" />
<rect x="620" y="67" width="3" height="381.5" fill="#0000e8" stroke="none" stroke-width="0.6" />
<rect x="306" y="408" width="286" height="40.5" fill="url(#hW)" stroke="none" stroke-width="0.6" />
<rect x="306" y="408" width="286" height="4.2" fill="url(#grav)" stroke="none" stroke-width="0.6" />
<path d="M306 448.2L592 448.2" stroke="#bbb" stroke-width="0.5" />
<path d="M306.2 408L306.2 448.5" stroke="#ccc" stroke-width="0.5" />
<path d="M591.8 408L591.8 448.5" stroke="#ccc" stroke-width="0.5" />
<rect x="463" y="408" width="21.5" height="9" fill="#000" stroke="none" stroke-width="0.6" />
<path d="M463 407.5L465 407.5L465 416L482.5 416L482.5 407.5L484.5 407.5" stroke="#0a1eff" stroke-width="1.6" fill="none" />
<path d="M461 412L463 412L463 418.5L484.5 418.5L484.5 412L487 412" stroke="#ddd" stroke-width="0.6" fill="none" />
<path d="M345 407.8L592 407.8" stroke="#0a1eff" stroke-width="2.2" />
<path d="M306 407.6L346 407.6" stroke="#cfd6ff" stroke-width="1.2" />
<rect x="463.5" y="406" width="20.5" height="3.2" fill="#000" stroke="none" stroke-width="0.6" />
<path d="M463 407.5L465 407.5L465 416L482.5 416L482.5 407.5L484.5 407.5" stroke="#0a1eff" stroke-width="1.6" fill="none" />
<path d="M347 412L347 421L369 421L369 412" stroke="#ddd" stroke-width="0.5" fill="none" stroke-dasharray="2 1.2"/>
<path d="M369 421L440 421" stroke="#ddd" stroke-width="0.5" fill="none" stroke-dasharray="2 1.2"/>
<path d="M380 412L380 418L388 418L388 412" stroke="#ddd" stroke-width="0.5" fill="none" />
<path d="M500 421L585 421" stroke="#ddd" stroke-width="0.4" fill="none" stroke-dasharray="2 1.2"/>
<text x="319" y="405" font-size="4" fill="#ffee00" font-style="italic">±0,320</text>
<text x="557" y="405" font-size="4" fill="#ffee00" font-style="italic">±0,320</text>
<rect x="318" y="435" width="13" height="5" fill="#000" stroke="none" stroke-width="0.6" />
<text x="319" y="439.5" font-size="4" fill="#ffee00" font-style="italic">-2,550</text>
<path d="M310 443.5L328 443.5" stroke="#fff" stroke-width="0.4" />
<path d="M367.5 127.5L346 127.5L423.5 78.8L446 78.8" stroke="#fff" stroke-width="0.8" fill="none" />
<path d="M346 127.5L342.5 177.5L364 177.5" stroke="#fff" stroke-width="0.8" fill="none" />
<path d="M350 177.5L350 398L371 398" stroke="#fff" stroke-width="0.8" fill="none" />
<path d="M350 398L350 408" stroke="#fff" stroke-width="0.7" />
<path d="M364 128L364 168" stroke="#fff" stroke-width="0.5" />
<path d="M401 104L401 72.5L410 72.5L410 99" stroke="#fff" stroke-width="0.95" fill="none" />
<path d="M401 74L410 74" stroke="#fff" stroke-width="0.5" />
<path d="M466 71.5L466 67L469.5 67L469.5 76" stroke="#fff" stroke-width="0.5" fill="none" />
<path d="M366 167.5L368 127.5L456.3 71.5L545 127L548 148" stroke="#0a1eff" stroke-width="4.6" fill="none" stroke-linejoin="miter"/>
<path d="M366 167.5L368 127.5L456.3 71.5L545 127L548 148" stroke="#fff" stroke-width="0.7" fill="none" />
<path d="M407.5 107L456.3 76.5L505 107" stroke="#fff" stroke-width="0.6" fill="none" />
<path d="M456.3 74L456.3 107" stroke="#fff" stroke-width="0.6" />
<path d="M455.3 78L455.3 107" stroke="#fff" stroke-width="0.4" />
<path d="M365 166.5L377 166.5" stroke="#0a1eff" stroke-width="2.6" fill="none" />
<path d="M370 130L368.5 164" stroke="#fff" stroke-width="0.5" stroke-dasharray="1.5 1"/>
<path d="M407 107.5L506 107.5" stroke="#0a1eff" stroke-width="3" />
<path d="M407 107.5L506 107.5" stroke="#fff" stroke-width="0.5" />
<path d="M374 130.5L401.5 111.3L484 111.3" stroke="#0a1eff" stroke-width="2.4" fill="none" />
<path d="M488 111.3L512 111.3L541 130" stroke="#0a1eff" stroke-width="2.2" fill="none" />
<path d="M374 130L374 168" stroke="#0a1eff" stroke-width="2" />
<path d="M541 130L541 146" stroke="#0a1eff" stroke-width="1.6" />
<path d="M540 148L549.5 148" stroke="#0a1eff" stroke-width="3" />
<path d="M545.5 130L547 146" stroke="#fff" stroke-width="0.5" stroke-dasharray="1.5 1"/>
<path d="M483.5 111L483.5 408" stroke="#0a1eff" stroke-width="2.6" />
<path d="M488 111L488 408" stroke="#0a1eff" stroke-width="2" />
<path d="M461.5 111L461.5 408" stroke="#fff" stroke-width="0.5" />
<path d="M464.5 111L464.5 408" stroke="#fff" stroke-width="0.5" />
<rect x="461" y="111" width="4" height="10" fill="#0a1eff" stroke="none" stroke-width="0.6" rx="1.5"/>
<path d="M372 168L372 408" stroke="#fff" stroke-width="0.5" />
<path d="M376 168L376 408" stroke="#fff" stroke-width="0.5" />
<path d="M537 128L537 408" stroke="#fff" stroke-width="0.5" />
<path d="M540.5 128L540.5 408" stroke="#fff" stroke-width="0.5" />
<path d="M543 150L543 165" stroke="#fff" stroke-width="0.4" />
<rect x="426" y="140.2" width="122" height="4.6" fill="#0a1eff" stroke="none" stroke-width="0.6" />
<path d="M428 142.2L547 142.2" stroke="#9db0ff" stroke-width="0.5" />
<rect x="461" y="144.5" width="4" height="9.5" fill="#0a1eff" stroke="none" stroke-width="0.6" rx="1.5"/>
<path d="M532.5 144.5L532.5 149L541 149L541 144.5" stroke="#0a1eff" stroke-width="2" fill="none" />
<path d="M481 142.5L490 142.5" stroke="#ccd" stroke-width="0.5" />
<path d="M513.5 140L513.5 136" stroke="#fff" stroke-width="0.4" />
<circle cx="513.5" cy="133.2" r="3" fill="#000" stroke="#fff" stroke-width="0.7"/><text x="513.5" y="134.42" font-size="3.4" fill="#fff" text-anchor="middle">P2</text>
<text x="489.5" y="139" font-size="4.6" fill="#ffee00" font-style="italic">±22,670</text>
<text x="517" y="139.5" font-size="4.6" fill="#ffee00" font-style="italic">±22,590</text>
<path d="M489 139.7L502 139.7" stroke="#ffee00" stroke-width="0.3" />
<rect x="426" y="176.2" width="131" height="4.6" fill="#0a1eff" stroke="none" stroke-width="0.6" />
<path d="M428 178.2L556 178.2" stroke="#9db0ff" stroke-width="0.5" />
<rect x="461" y="180.5" width="4" height="9.5" fill="#0a1eff" stroke="none" stroke-width="0.6" rx="1.5"/>
<path d="M532.5 180.5L532.5 185L541 185L541 180.5" stroke="#0a1eff" stroke-width="2" fill="none" />
<path d="M481 178.5L490 178.5" stroke="#ccd" stroke-width="0.5" />
<rect x="541.5" y="164" width="14.5" height="12" fill="none" stroke="#fff" stroke-width="0.8" />
<rect x="543.3" y="165.8" width="11" height="8.8" fill="none" stroke="#fff" stroke-width="0.5" />
<path d="M537 164L541.5 164" stroke="#fff" stroke-width="0.5" />
<circle cx="549.5" cy="185.3" r="3" fill="#000" stroke="#fff" stroke-width="0.7"/><text x="549.5" y="186.52" font-size="3.4" fill="#fff" text-anchor="middle">P1</text>
<path d="M513.5 176L513.5 172" stroke="#fff" stroke-width="0.4" />
<circle cx="513.5" cy="169.2" r="3" fill="#000" stroke="#fff" stroke-width="0.7"/><text x="513.5" y="170.42" font-size="3.4" fill="#fff" text-anchor="middle">P2</text>
<text x="489.5" y="175" font-size="4.6" fill="#ffee00" font-style="italic">±19,470</text>
<text x="517" y="175.5" font-size="4.6" fill="#ffee00" font-style="italic">±19,590</text>
<path d="M489 175.7L502 175.7" stroke="#ffee00" stroke-width="0.3" />
<rect x="431" y="152" width="11.5" height="24" fill="none" stroke="#fff" stroke-width="0.6" />
<rect x="432.2" y="153.2" width="9.1" height="22.8" fill="none" stroke="#fff" stroke-width="0.35" />
<rect x="447.5" y="152" width="11.5" height="24" fill="none" stroke="#fff" stroke-width="0.6" />
<rect x="448.7" y="153.2" width="9.1" height="22.8" fill="none" stroke="#fff" stroke-width="0.35" />
<path d="M436 176L436 168.5" stroke="#fff" stroke-width="0.4" />
<circle cx="436" cy="165.7" r="3" fill="#000" stroke="#fff" stroke-width="0.7"/><text x="436" y="166.92" font-size="3.4" fill="#fff" text-anchor="middle">P2</text>
<path d="M457 165.5L458 165.5" stroke="#fff" stroke-width="0.5" />
<rect x="426" y="211.7" width="131" height="4.6" fill="#0a1eff" stroke="none" stroke-width="0.6" />
<path d="M428 213.7L556 213.7" stroke="#9db0ff" stroke-width="0.5" />
<rect x="461" y="216" width="4" height="9.5" fill="#0a1eff" stroke="none" stroke-width="0.6" rx="1.5"/>
<path d="M532.5 216L532.5 220.5L541 220.5L541 216" stroke="#0a1eff" stroke-width="2" fill="none" />
<path d="M481 214L490 214" stroke="#ccd" stroke-width="0.5" />
<rect x="541.5" y="199.5" width="14.5" height="12" fill="none" stroke="#fff" stroke-width="0.8" />
<rect x="543.3" y="201.3" width="11" height="8.8" fill="none" stroke="#fff" stroke-width="0.5" />
<path d="M537 199.5L541.5 199.5" stroke="#fff" stroke-width="0.5" />
<circle cx="549.5" cy="220.8" r="3" fill="#000" stroke="#fff" stroke-width="0.7"/><text x="549.5" y="222.02" font-size="3.4" fill="#fff" text-anchor="middle">P1</text>
<path d="M513.5 211.5L513.5 207.5" stroke="#fff" stroke-width="0.4" />
<circle cx="513.5" cy="204.7" r="3" fill="#000" stroke="#fff" stroke-width="0.7"/><text x="513.5" y="205.92" font-size="3.4" fill="#fff" text-anchor="middle">P2</text>
<text x="489.5" y="210.5" font-size="4.6" fill="#ffee00" font-style="italic">±16,670</text>
<text x="517" y="211" font-size="4.6" fill="#ffee00" font-style="italic">±16,590</text>
<path d="M489 211.2L502 211.2" stroke="#ffee00" stroke-width="0.3" />
<rect x="431" y="187.5" width="11.5" height="24" fill="none" stroke="#fff" stroke-width="0.6" />
<rect x="432.2" y="188.7" width="9.1" height="22.8" fill="none" stroke="#fff" stroke-width="0.35" />
<rect x="447.5" y="187.5" width="11.5" height="24" fill="none" stroke="#fff" stroke-width="0.6" />
<rect x="448.7" y="188.7" width="9.1" height="22.8" fill="none" stroke="#fff" stroke-width="0.35" />
<path d="M436 211.5L436 204" stroke="#fff" stroke-width="0.4" />
<circle cx="436" cy="201.2" r="3" fill="#000" stroke="#fff" stroke-width="0.7"/><text x="436" y="202.42" font-size="3.4" fill="#fff" text-anchor="middle">P2</text>
<path d="M457 201L458 201" stroke="#fff" stroke-width="0.5" />
<rect x="426" y="247.7" width="131" height="4.6" fill="#0a1eff" stroke="none" stroke-width="0.6" />
<path d="M428 249.7L556 249.7" stroke="#9db0ff" stroke-width="0.5" />
<rect x="461" y="252" width="4" height="9.5" fill="#0a1eff" stroke="none" stroke-width="0.6" rx="1.5"/>
<path d="M532.5 252L532.5 256.5L541 256.5L541 252" stroke="#0a1eff" stroke-width="2" fill="none" />
<path d="M481 250L490 250" stroke="#ccd" stroke-width="0.5" />
<rect x="541.5" y="235.5" width="14.5" height="12" fill="none" stroke="#fff" stroke-width="0.8" />
<rect x="543.3" y="237.3" width="11" height="8.8" fill="none" stroke="#fff" stroke-width="0.5" />
<path d="M537 235.5L541.5 235.5" stroke="#fff" stroke-width="0.5" />
<circle cx="549.5" cy="256.8" r="3" fill="#000" stroke="#fff" stroke-width="0.7"/><text x="549.5" y="258.02" font-size="3.4" fill="#fff" text-anchor="middle">P1</text>
<path d="M513.5 247.5L513.5 243.5" stroke="#fff" stroke-width="0.4" />
<circle cx="513.5" cy="240.7" r="3" fill="#000" stroke="#fff" stroke-width="0.7"/><text x="513.5" y="241.92" font-size="3.4" fill="#fff" text-anchor="middle">P2</text>
<text x="489.5" y="246.5" font-size="4.6" fill="#ffee00" font-style="italic">±13,470</text>
<text x="517" y="247" font-size="4.6" fill="#ffee00" font-style="italic">±13,590</text>
<path d="M489 247.2L502 247.2" stroke="#ffee00" stroke-width="0.3" />
<rect x="431" y="223.5" width="11.5" height="24" fill="none" stroke="#fff" stroke-width="0.6" />
<rect x="432.2" y="224.7" width="9.1" height="22.8" fill="none" stroke="#fff" stroke-width="0.35" />
<rect x="447.5" y="223.5" width="11.5" height="24" fill="none" stroke="#fff" stroke-width="0.6" />
<rect x="448.7" y="224.7" width="9.1" height="22.8" fill="none" stroke="#fff" stroke-width="0.35" />
<path d="M436 247.5L436 240" stroke="#fff" stroke-width="0.4" />
<circle cx="436" cy="237.2" r="3" fill="#000" stroke="#fff" stroke-width="0.7"/><text x="436" y="238.42" font-size="3.4" fill="#fff" text-anchor="middle">P2</text>
<path d="M457 237L458 237" stroke="#fff" stroke-width="0.5" />
<rect x="426" y="283.2" width="131" height="4.6" fill="#0a1eff" stroke="none" stroke-width="0.6" />
<path d="M428 285.2L556 285.2" stroke="#9db0ff" stroke-width="0.5" />
<rect x="461" y="287.5" width="4" height="9.5" fill="#0a1eff" stroke="none" stroke-width="0.6" rx="1.5"/>
<path d="M532.5 287.5L532.5 292L541 292L541 287.5" stroke="#0a1eff" stroke-width="2" fill="none" />
<path d="M481 285.5L490 285.5" stroke="#ccd" stroke-width="0.5" />
<rect x="541.5" y="271" width="14.5" height="12" fill="none" stroke="#fff" stroke-width="0.8" />
<rect x="543.3" y="272.8" width="11" height="8.8" fill="none" stroke="#fff" stroke-width="0.5" />
<path d="M537 271L541.5 271" stroke="#fff" stroke-width="0.5" />
<circle cx="549.5" cy="292.3" r="3" fill="#000" stroke="#fff" stroke-width="0.7"/><text x="549.5" y="293.52" font-size="3.4" fill="#fff" text-anchor="middle">P1</text>
<path d="M513.5 283L513.5 279" stroke="#fff" stroke-width="0.4" />
<circle cx="513.5" cy="276.2" r="3" fill="#000" stroke="#fff" stroke-width="0.7"/><text x="513.5" y="277.42" font-size="3.4" fill="#fff" text-anchor="middle">P2</text>
<text x="489.5" y="282" font-size="4.6" fill="#ffee00" font-style="italic">±10,670</text>
<text x="517" y="282.5" font-size="4.6" fill="#ffee00" font-style="italic">±10,590</text>
<path d="M489 282.7L502 282.7" stroke="#ffee00" stroke-width="0.3" />
<rect x="431" y="259" width="11.5" height="24" fill="none" stroke="#fff" stroke-width="0.6" />
<rect x="432.2" y="260.2" width="9.1" height="22.8" fill="none" stroke="#fff" stroke-width="0.35" />
<rect x="447.5" y="259" width="11.5" height="24" fill="none" stroke="#fff" stroke-width="0.6" />
<rect x="448.7" y="260.2" width="9.1" height="22.8" fill="none" stroke="#fff" stroke-width="0.35" />
<path d="M436 283L436 275.5" stroke="#fff" stroke-width="0.4" />
<circle cx="436" cy="272.7" r="3" fill="#000" stroke="#fff" stroke-width="0.7"/><text x="436" y="273.92" font-size="3.4" fill="#fff" text-anchor="middle">P2</text>
<path d="M457 272.5L458 272.5" stroke="#fff" stroke-width="0.5" />
<rect x="426" y="319.2" width="131" height="4.6" fill="#0a1eff" stroke="none" stroke-width="0.6" />
<path d="M428 321.2L556 321.2" stroke="#9db0ff" stroke-width="0.5" />
<rect x="461" y="323.5" width="4" height="9.5" fill="#0a1eff" stroke="none" stroke-width="0.6" rx="1.5"/>
<path d="M532.5 323.5L532.5 328L541 328L541 323.5" stroke="#0a1eff" stroke-width="2" fill="none" />
<path d="M481 321.5L490 321.5" stroke="#ccd" stroke-width="0.5" />
<rect x="541.5" y="307" width="14.5" height="12" fill="none" stroke="#fff" stroke-width="0.8" />
<rect x="543.3" y="308.8" width="11" height="8.8" fill="none" stroke="#fff" stroke-width="0.5" />
<path d="M537 307L541.5 307" stroke="#fff" stroke-width="0.5" />
<circle cx="549.5" cy="328.3" r="3" fill="#000" stroke="#fff" stroke-width="0.7"/><text x="549.5" y="329.52" font-size="3.4" fill="#fff" text-anchor="middle">P1</text>
<path d="M513.5 319L513.5 315" stroke="#fff" stroke-width="0.4" />
<circle cx="513.5" cy="312.2" r="3" fill="#000" stroke="#fff" stroke-width="0.7"/><text x="513.5" y="313.42" font-size="3.4" fill="#fff" text-anchor="middle">P2</text>
<text x="489.5" y="318" font-size="4.6" fill="#ffee00" font-style="italic">±7,470</text>
<text x="517" y="318.5" font-size="4.6" fill="#ffee00" font-style="italic">±7,590</text>
<path d="M489 318.7L502 318.7" stroke="#ffee00" stroke-width="0.3" />
<rect x="431" y="295" width="11.5" height="24" fill="none" stroke="#fff" stroke-width="0.6" />
<rect x="432.2" y="296.2" width="9.1" height="22.8" fill="none" stroke="#fff" stroke-width="0.35" />
<rect x="447.5" y="295" width="11.5" height="24" fill="none" stroke="#fff" stroke-width="0.6" />
<rect x="448.7" y="296.2" width="9.1" height="22.8" fill="none" stroke="#fff" stroke-width="0.35" />
<path d="M436 319L436 311.5" stroke="#fff" stroke-width="0.4" />
<circle cx="436" cy="308.7" r="3" fill="#000" stroke="#fff" stroke-width="0.7"/><text x="436" y="309.92" font-size="3.4" fill="#fff" text-anchor="middle">P2</text>
<path d="M457 308.5L458 308.5" stroke="#fff" stroke-width="0.5" />
<rect x="426" y="355.2" width="131" height="4.6" fill="#0a1eff" stroke="none" stroke-width="0.6" />
<path d="M428 357.2L556 357.2" stroke="#9db0ff" stroke-width="0.5" />
<rect x="461" y="359.5" width="4" height="9.5" fill="#0a1eff" stroke="none" stroke-width="0.6" rx="1.5"/>
<path d="M532.5 359.5L532.5 373.5L541 373.5L541 359.5" stroke="#0a1eff" stroke-width="2" fill="none" />
<path d="M481 357.5L490 357.5" stroke="#ccd" stroke-width="0.5" />
<rect x="541.5" y="343" width="14.5" height="12" fill="none" stroke="#fff" stroke-width="0.8" />
<rect x="543.3" y="344.8" width="11" height="8.8" fill="none" stroke="#fff" stroke-width="0.5" />
<path d="M537 343L541.5 343" stroke="#fff" stroke-width="0.5" />
<circle cx="549.5" cy="364.3" r="3" fill="#000" stroke="#fff" stroke-width="0.7"/><text x="549.5" y="365.52" font-size="3.4" fill="#fff" text-anchor="middle">P1</text>
<path d="M513.5 355L513.5 351" stroke="#fff" stroke-width="0.4" />
<circle cx="513.5" cy="348.2" r="3" fill="#000" stroke="#fff" stroke-width="0.7"/><text x="513.5" y="349.42" font-size="3.4" fill="#fff" text-anchor="middle">P2</text>
<text x="489.5" y="354" font-size="4.6" fill="#ffee00" font-style="italic">±4,670</text>
<text x="517" y="354.5" font-size="4.6" fill="#ffee00" font-style="italic">±4,590</text>
<path d="M489 354.7L502 354.7" stroke="#ffee00" stroke-width="0.3" />
<rect x="431" y="331" width="11.5" height="24" fill="none" stroke="#fff" stroke-width="0.6" />
<rect x="432.2" y="332.2" width="9.1" height="22.8" fill="none" stroke="#fff" stroke-width="0.35" />
<rect x="447.5" y="331" width="11.5" height="24" fill="none" stroke="#fff" stroke-width="0.6" />
<rect x="448.7" y="332.2" width="9.1" height="22.8" fill="none" stroke="#fff" stroke-width="0.35" />
<path d="M436 355L436 347.5" stroke="#fff" stroke-width="0.4" />
<circle cx="436" cy="344.7" r="3" fill="#000" stroke="#fff" stroke-width="0.7"/><text x="436" y="345.92" font-size="3.4" fill="#fff" text-anchor="middle">P2</text>
<path d="M457 344.5L458 344.5" stroke="#fff" stroke-width="0.5" />
<path d="M397 162.5L427 144.8" stroke="#fff" stroke-width="0.7" fill="none" />
<path d="M399 162.32L400.4 162.69L401.8 160.67L403.2 161.04L404.6 159.02L406 159.39L407.4 157.36L408.8 157.74L410.2 155.71L411.6 156.09L413 154.06L414.4 154.43L415.8 152.41L417.2 152.78L418.6 150.76L420 151.13L421.4 149.1L422.8 149.48L424.2 147.45L425.6 147.83" stroke="#fff" stroke-width="0.5" fill="none" />
<path d="M396.3 146.2L427 127.78" stroke="#fff" stroke-width="0.9" fill="none" />
<path d="M396.3 147.7L427 129.28" stroke="#fff" stroke-width="0.6" fill="none" />
<path d="M398 155.18L427 137.78" stroke="#fff" stroke-width="0.7" fill="none" />
<path d="M398 156.48L427 139.08" stroke="#fff" stroke-width="0.5" fill="none" />
<path d="M402.4 142.54L402.4 152.54" stroke="#fff" stroke-width="0.8" />
<path d="M408.5 138.88L408.5 148.88" stroke="#fff" stroke-width="0.8" />
<path d="M414.6 135.22L414.6 145.22" stroke="#fff" stroke-width="0.8" />
<path d="M420.7 131.56L420.7 141.56" stroke="#fff" stroke-width="0.8" />
<path d="M426.8 127.9L426.8 137.9" stroke="#fff" stroke-width="0.8" />
<path d="M377.5 157L396.5 157L426.5 176.2L426.5 180.8L425.5 180.8L395.4 163L377.5 163z" stroke="none" stroke-width="0.7" fill="#0a1eff" />
<path d="M379 160L396 160L425.5 178.5" stroke="#4f6bff" stroke-width="0.4" fill="none" />
<rect x="371.4" y="148.5" width="5.6" height="19.5" fill="#00063a" stroke="#0a1eff" stroke-width="2.1" />
<path d="M370.5 160.5L378 160.5" stroke="#dde" stroke-width="0.5" />
<path d="M370.5 162.5L378 162.5" stroke="#dde" stroke-width="0.5" />
<path d="M396.3 146.1L427 165.75" stroke="#fff" stroke-width="1" fill="none" />
<path d="M396.3 147.5L427 167.15" stroke="#fff" stroke-width="0.6" fill="none" />
<path d="M396.3 155.3L427 174.95" stroke="#fff" stroke-width="0.6" fill="none" />
<path d="M396.3 156.6L427 176.25" stroke="#fff" stroke-width="0.8" fill="none" />
<path d="M396.3 146.1L396.3 156.6" stroke="#fff" stroke-width="0.95" />
<path d="M402.45 150.04L402.45 160.54" stroke="#fff" stroke-width="0.95" />
<path d="M408.6 153.97L408.6 164.47" stroke="#fff" stroke-width="0.95" />
<path d="M414.75 157.91L414.75 168.41" stroke="#fff" stroke-width="0.95" />
<path d="M420.9 161.84L420.9 172.34" stroke="#fff" stroke-width="0.95" />
<path d="M427.05 165.78L427.05 176.28" stroke="#fff" stroke-width="0.95" />
<path d="M397.5 146.87L397.5 157.37" stroke="#fff" stroke-width="0.5" />
<path d="M391.7 157L391.7 147.5" stroke="#fff" stroke-width="0.5" />
<circle cx="391.7" cy="144.4" r="3" fill="#000" stroke="#fff" stroke-width="0.7"/><text x="391.7" y="145.62" font-size="3.4" fill="#fff" text-anchor="middle">P3</text>
<circle cx="403.4" cy="138.2" r="3" fill="#000" stroke="#fff" stroke-width="0.7"/><text x="403.4" y="139.42" font-size="3.4" fill="#fff" text-anchor="middle">P4</text>
<text x="421.5" y="155" font-size="4.6" fill="#ffee00" font-style="italic">±21,770</text>
<path d="M421 155.8L433 155.8" stroke="#ffee00" stroke-width="0.35" />
<path d="M397 198L427 180.8" stroke="#fff" stroke-width="0.7" fill="none" />
<path d="M399 197.85L400.4 198.25L401.8 196.25L403.2 196.65L404.6 194.64L406 195.04L407.4 193.04L408.8 193.43L410.2 191.43L411.6 191.83L413 189.83L414.4 190.22L415.8 188.22L417.2 188.62L418.6 186.62L420 187.01L421.4 185.01L422.8 185.41L424.2 183.41L425.6 183.8" stroke="#fff" stroke-width="0.5" fill="none" />
<path d="M396.3 181.7L422 166.28" stroke="#fff" stroke-width="0.9" fill="none" />
<path d="M396.3 183.2L422 167.78" stroke="#fff" stroke-width="0.6" fill="none" />
<path d="M398 190.68L422 176.28" stroke="#fff" stroke-width="0.7" fill="none" />
<path d="M398 191.98L422 177.58" stroke="#fff" stroke-width="0.5" fill="none" />
<path d="M402.4 178.04L402.4 188.04" stroke="#fff" stroke-width="0.8" />
<path d="M408.5 174.38L408.5 184.38" stroke="#fff" stroke-width="0.8" />
<path d="M414.6 170.72L414.6 180.72" stroke="#fff" stroke-width="0.8" />
<path d="M420.7 167.06L420.7 177.06" stroke="#fff" stroke-width="0.8" />
<path d="M377.5 192.5L396.5 192.5L426.5 211.7L426.5 216.3L425.5 216.3L395.4 198.5L377.5 198.5z" stroke="none" stroke-width="0.7" fill="#0a1eff" />
<path d="M379 195.5L396 195.5L425.5 214" stroke="#4f6bff" stroke-width="0.4" fill="none" />
<rect x="371.4" y="184" width="5.6" height="19.5" fill="#00063a" stroke="#0a1eff" stroke-width="2.1" />
<path d="M370.5 196L378 196" stroke="#dde" stroke-width="0.5" />
<path d="M370.5 198L378 198" stroke="#dde" stroke-width="0.5" />
<path d="M396.3 181.6L427 201.25" stroke="#fff" stroke-width="1" fill="none" />
<path d="M396.3 183L427 202.65" stroke="#fff" stroke-width="0.6" fill="none" />
<path d="M396.3 190.8L427 210.45" stroke="#fff" stroke-width="0.6" fill="none" />
<path d="M396.3 192.1L427 211.75" stroke="#fff" stroke-width="0.8" fill="none" />
<path d="M396.3 181.6L396.3 192.1" stroke="#fff" stroke-width="0.95" />
<path d="M402.45 185.54L402.45 196.04" stroke="#fff" stroke-width="0.95" />
<path d="M408.6 189.47L408.6 199.97" stroke="#fff" stroke-width="0.95" />
<path d="M414.75 193.41L414.75 203.91" stroke="#fff" stroke-width="0.95" />
<path d="M420.9 197.34L420.9 207.84" stroke="#fff" stroke-width="0.95" />
<path d="M427.05 201.28L427.05 211.78" stroke="#fff" stroke-width="0.95" />
<path d="M397.5 182.37L397.5 192.87" stroke="#fff" stroke-width="0.5" />
<path d="M391.7 192.5L391.7 183" stroke="#fff" stroke-width="0.5" />
<circle cx="391.7" cy="179.9" r="3" fill="#000" stroke="#fff" stroke-width="0.7"/><text x="391.7" y="181.12" font-size="3.4" fill="#fff" text-anchor="middle">P3</text>
<circle cx="403.4" cy="174.2" r="3" fill="#000" stroke="#fff" stroke-width="0.7"/><text x="403.4" y="175.42" font-size="3.4" fill="#fff" text-anchor="middle">P4</text>
<text x="421.5" y="190.5" font-size="4.6" fill="#ffee00" font-style="italic">±18,770</text>
<path d="M421 191.3L433 191.3" stroke="#ffee00" stroke-width="0.35" />
<path d="M397 233.5L427 216.3" stroke="#fff" stroke-width="0.7" fill="none" />
<path d="M399 233.35L400.4 233.75L401.8 231.75L403.2 232.15L404.6 230.14L406 230.54L407.4 228.54L408.8 228.93L410.2 226.93L411.6 227.33L413 225.33L414.4 225.72L415.8 223.72L417.2 224.12L418.6 222.12L420 222.51L421.4 220.51L422.8 220.91L424.2 218.91L425.6 219.3" stroke="#fff" stroke-width="0.5" fill="none" />
<path d="M396.3 217.2L422 201.78" stroke="#fff" stroke-width="0.9" fill="none" />
<path d="M396.3 218.7L422 203.28" stroke="#fff" stroke-width="0.6" fill="none" />
<path d="M398 226.18L422 211.78" stroke="#fff" stroke-width="0.7" fill="none" />
<path d="M398 227.48L422 213.08" stroke="#fff" stroke-width="0.5" fill="none" />
<path d="M402.4 213.54L402.4 223.54" stroke="#fff" stroke-width="0.8" />
<path d="M408.5 209.88L408.5 219.88" stroke="#fff" stroke-width="0.8" />
<path d="M414.6 206.22L414.6 216.22" stroke="#fff" stroke-width="0.8" />
<path d="M420.7 202.56L420.7 212.56" stroke="#fff" stroke-width="0.8" />
<path d="M377.5 228L396.5 228L426.5 247.7L426.5 252.3L425.5 252.3L395.4 234L377.5 234z" stroke="none" stroke-width="0.7" fill="#0a1eff" />
<path d="M379 231L396 231L425.5 250" stroke="#4f6bff" stroke-width="0.4" fill="none" />
<rect x="371.4" y="219.5" width="5.6" height="19.5" fill="#00063a" stroke="#0a1eff" stroke-width="2.1" />
<path d="M370.5 231.5L378 231.5" stroke="#dde" stroke-width="0.5" />
<path d="M370.5 233.5L378 233.5" stroke="#dde" stroke-width="0.5" />
<path d="M396.3 217.1L427 237.26" stroke="#fff" stroke-width="1" fill="none" />
<path d="M396.3 218.5L427 238.66" stroke="#fff" stroke-width="0.6" fill="none" />
<path d="M396.3 226.3L427 246.46" stroke="#fff" stroke-width="0.6" fill="none" />
<path d="M396.3 227.6L427 247.76" stroke="#fff" stroke-width="0.8" fill="none" />
<path d="M396.3 217.1L396.3 227.6" stroke="#fff" stroke-width="0.95" />
<path d="M402.45 221.14L402.45 231.64" stroke="#fff" stroke-width="0.95" />
<path d="M408.6 225.18L408.6 235.68" stroke="#fff" stroke-width="0.95" />
<path d="M414.75 229.22L414.75 239.72" stroke="#fff" stroke-width="0.95" />
<path d="M420.9 233.25L420.9 243.75" stroke="#fff" stroke-width="0.95" />
<path d="M427.05 237.29L427.05 247.79" stroke="#fff" stroke-width="0.95" />
<path d="M397.5 217.89L397.5 228.39" stroke="#fff" stroke-width="0.5" />
<path d="M391.7 228L391.7 218.5" stroke="#fff" stroke-width="0.5" />
<circle cx="391.7" cy="215.4" r="3" fill="#000" stroke="#fff" stroke-width="0.7"/><text x="391.7" y="216.62" font-size="3.4" fill="#fff" text-anchor="middle">P3</text>
<circle cx="403.4" cy="209.7" r="3" fill="#000" stroke="#fff" stroke-width="0.7"/><text x="403.4" y="210.92" font-size="3.4" fill="#fff" text-anchor="middle">P4</text>
<text x="421.5" y="226" font-size="4.6" fill="#ffee00" font-style="italic">±15,770</text>
<path d="M421 226.8L433 226.8" stroke="#ffee00" stroke-width="0.35" />
<path d="M397 269L427 252.3" stroke="#fff" stroke-width="0.7" fill="none" />
<path d="M399 268.89L400.4 269.31L401.8 267.33L403.2 267.75L404.6 265.77L406 266.19L407.4 264.21L408.8 264.63L410.2 262.65L411.6 263.07L413 261.09L414.4 261.51L415.8 259.53L417.2 259.96L418.6 257.98L420 258.4L421.4 256.42L422.8 256.84L424.2 254.86L425.6 255.28" stroke="#fff" stroke-width="0.5" fill="none" />
<path d="M396.3 252.7L422 237.28" stroke="#fff" stroke-width="0.9" fill="none" />
<path d="M396.3 254.2L422 238.78" stroke="#fff" stroke-width="0.6" fill="none" />
<path d="M398 261.68L422 247.28" stroke="#fff" stroke-width="0.7" fill="none" />
<path d="M398 262.98L422 248.58" stroke="#fff" stroke-width="0.5" fill="none" />
<path d="M402.4 249.04L402.4 259.04" stroke="#fff" stroke-width="0.8" />
<path d="M408.5 245.38L408.5 255.38" stroke="#fff" stroke-width="0.8" />
<path d="M414.6 241.72L414.6 251.72" stroke="#fff" stroke-width="0.8" />
<path d="M420.7 238.06L420.7 248.06" stroke="#fff" stroke-width="0.8" />
<path d="M377.5 263.5L396.5 263.5L426.5 283.2L426.5 287.8L425.5 287.8L395.4 269.5L377.5 269.5z" stroke="none" stroke-width="0.7" fill="#0a1eff" />
<path d="M379 266.5L396 266.5L425.5 285.5" stroke="#4f6bff" stroke-width="0.4" fill="none" />
<rect x="371.4" y="255" width="5.6" height="19.5" fill="#00063a" stroke="#0a1eff" stroke-width="2.1" />
<path d="M370.5 267L378 267" stroke="#dde" stroke-width="0.5" />
<path d="M370.5 269L378 269" stroke="#dde" stroke-width="0.5" />
<path d="M396.3 252.6L427 272.76" stroke="#fff" stroke-width="1" fill="none" />
<path d="M396.3 254L427 274.16" stroke="#fff" stroke-width="0.6" fill="none" />
<path d="M396.3 261.8L427 281.96" stroke="#fff" stroke-width="0.6" fill="none" />
<path d="M396.3 263.1L427 283.26" stroke="#fff" stroke-width="0.8" fill="none" />
<path d="M396.3 252.6L396.3 263.1" stroke="#fff" stroke-width="0.95" />
<path d="M402.45 256.64L402.45 267.14" stroke="#fff" stroke-width="0.95" />
<path d="M408.6 260.68L408.6 271.18" stroke="#fff" stroke-width="0.95" />
<path d="M414.75 264.72L414.75 275.22" stroke="#fff" stroke-width="0.95" />
<path d="M420.9 268.75L420.9 279.25" stroke="#fff" stroke-width="0.95" />
<path d="M427.05 272.79L427.05 283.29" stroke="#fff" stroke-width="0.95" />
<path d="M397.5 253.39L397.5 263.89" stroke="#fff" stroke-width="0.5" />
<path d="M391.7 263.5L391.7 254" stroke="#fff" stroke-width="0.5" />
<circle cx="391.7" cy="250.9" r="3" fill="#000" stroke="#fff" stroke-width="0.7"/><text x="391.7" y="252.12" font-size="3.4" fill="#fff" text-anchor="middle">P3</text>
<circle cx="403.4" cy="245.7" r="3" fill="#000" stroke="#fff" stroke-width="0.7"/><text x="403.4" y="246.92" font-size="3.4" fill="#fff" text-anchor="middle">P4</text>
<text x="421.5" y="261.5" font-size="4.6" fill="#ffee00" font-style="italic">±12,770</text>
<path d="M421 262.3L433 262.3" stroke="#ffee00" stroke-width="0.35" />
<path d="M397 305L427 287.8" stroke="#fff" stroke-width="0.7" fill="none" />
<path d="M399 304.85L400.4 305.25L401.8 303.25L403.2 303.65L404.6 301.64L406 302.04L407.4 300.04L408.8 300.43L410.2 298.43L411.6 298.83L413 296.83L414.4 297.22L415.8 295.22L417.2 295.62L418.6 293.62L420 294.01L421.4 292.01L422.8 292.41L424.2 290.41L425.6 290.8" stroke="#fff" stroke-width="0.5" fill="none" />
<path d="M396.3 288.7L422 273.28" stroke="#fff" stroke-width="0.9" fill="none" />
<path d="M396.3 290.2L422 274.78" stroke="#fff" stroke-width="0.6" fill="none" />
<path d="M398 297.68L422 283.28" stroke="#fff" stroke-width="0.7" fill="none" />
<path d="M398 298.98L422 284.58" stroke="#fff" stroke-width="0.5" fill="none" />
<path d="M402.4 285.04L402.4 295.04" stroke="#fff" stroke-width="0.8" />
<path d="M408.5 281.38L408.5 291.38" stroke="#fff" stroke-width="0.8" />
<path d="M414.6 277.72L414.6 287.72" stroke="#fff" stroke-width="0.8" />
<path d="M420.7 274.06L420.7 284.06" stroke="#fff" stroke-width="0.8" />
<path d="M377.5 299.5L396.5 299.5L426.5 319.2L426.5 323.8L425.5 323.8L395.4 305.5L377.5 305.5z" stroke="none" stroke-width="0.7" fill="#0a1eff" />
<path d="M379 302.5L396 302.5L425.5 321.5" stroke="#4f6bff" stroke-width="0.4" fill="none" />
<rect x="371.4" y="291" width="5.6" height="19.5" fill="#00063a" stroke="#0a1eff" stroke-width="2.1" />
<path d="M370.5 303L378 303" stroke="#dde" stroke-width="0.5" />
<path d="M370.5 305L378 305" stroke="#dde" stroke-width="0.5" />
<path d="M396.3 288.6L427 308.76" stroke="#fff" stroke-width="1" fill="none" />
<path d="M396.3 290L427 310.16" stroke="#fff" stroke-width="0.6" fill="none" />
<path d="M396.3 297.8L427 317.96" stroke="#fff" stroke-width="0.6" fill="none" />
<path d="M396.3 299.1L427 319.26" stroke="#fff" stroke-width="0.8" fill="none" />
<path d="M396.3 288.6L396.3 299.1" stroke="#fff" stroke-width="0.95" />
<path d="M402.45 292.64L402.45 303.14" stroke="#fff" stroke-width="0.95" />
<path d="M408.6 296.68L408.6 307.18" stroke="#fff" stroke-width="0.95" />
<path d="M414.75 300.72L414.75 311.22" stroke="#fff" stroke-width="0.95" />
<path d="M420.9 304.75L420.9 315.25" stroke="#fff" stroke-width="0.95" />
<path d="M427.05 308.79L427.05 319.29" stroke="#fff" stroke-width="0.95" />
<path d="M397.5 289.39L397.5 299.89" stroke="#fff" stroke-width="0.5" />
<path d="M391.7 299.5L391.7 290" stroke="#fff" stroke-width="0.5" />
<circle cx="391.7" cy="286.9" r="3" fill="#000" stroke="#fff" stroke-width="0.7"/><text x="391.7" y="288.12" font-size="3.4" fill="#fff" text-anchor="middle">P3</text>
<circle cx="403.4" cy="281.2" r="3" fill="#000" stroke="#fff" stroke-width="0.7"/><text x="403.4" y="282.42" font-size="3.4" fill="#fff" text-anchor="middle">P4</text>
<text x="421.5" y="297.5" font-size="4.6" fill="#ffee00" font-style="italic">±9,770</text>
<path d="M421 298.3L433 298.3" stroke="#ffee00" stroke-width="0.35" />
<path d="M397 342L427 323.8" stroke="#fff" stroke-width="0.7" fill="none" />
<path d="M399 341.79L400.4 342.14L401.8 340.09L403.2 340.44L404.6 338.39L406 338.74L407.4 336.69L408.8 337.04L410.2 334.99L411.6 335.34L413 333.29L414.4 333.64L415.8 331.59L417.2 331.95L418.6 329.9L420 330.25L421.4 328.2L422.8 328.55L424.2 326.5L425.6 326.85" stroke="#fff" stroke-width="0.5" fill="none" />
<path d="M396.3 325.7L422 310.28" stroke="#fff" stroke-width="0.9" fill="none" />
<path d="M396.3 327.2L422 311.78" stroke="#fff" stroke-width="0.6" fill="none" />
<path d="M398 334.68L422 320.28" stroke="#fff" stroke-width="0.7" fill="none" />
<path d="M398 335.98L422 321.58" stroke="#fff" stroke-width="0.5" fill="none" />
<path d="M402.4 322.04L402.4 332.04" stroke="#fff" stroke-width="0.8" />
<path d="M408.5 318.38L408.5 328.38" stroke="#fff" stroke-width="0.8" />
<path d="M414.6 314.72L414.6 324.72" stroke="#fff" stroke-width="0.8" />
<path d="M420.7 311.06L420.7 321.06" stroke="#fff" stroke-width="0.8" />
<path d="M377.5 336.5L396.5 336.5L426.5 355.2L426.5 359.8L425.5 359.8L395.4 342.5L377.5 342.5z" stroke="none" stroke-width="0.7" fill="#0a1eff" />
<path d="M379 339.5L396 339.5L425.5 357.5" stroke="#4f6bff" stroke-width="0.4" fill="none" />
<rect x="371.4" y="328" width="5.6" height="19.5" fill="#00063a" stroke="#0a1eff" stroke-width="2.1" />
<path d="M370.5 340L378 340" stroke="#dde" stroke-width="0.5" />
<path d="M370.5 342L378 342" stroke="#dde" stroke-width="0.5" />
<path d="M396.3 325.6L427 344.74" stroke="#fff" stroke-width="1" fill="none" />
<path d="M396.3 327L427 346.14" stroke="#fff" stroke-width="0.6" fill="none" />
<path d="M396.3 334.8L427 353.94" stroke="#fff" stroke-width="0.6" fill="none" />
<path d="M396.3 336.1L427 355.24" stroke="#fff" stroke-width="0.8" fill="none" />
<path d="M396.3 325.6L396.3 336.1" stroke="#fff" stroke-width="0.95" />
<path d="M402.45 329.43L402.45 339.93" stroke="#fff" stroke-width="0.95" />
<path d="M408.6 333.27L408.6 343.77" stroke="#fff" stroke-width="0.95" />
<path d="M414.75 337.1L414.75 347.6" stroke="#fff" stroke-width="0.95" />
<path d="M420.9 340.93L420.9 351.43" stroke="#fff" stroke-width="0.95" />
<path d="M427.05 344.77L427.05 355.27" stroke="#fff" stroke-width="0.95" />
<path d="M397.5 326.35L397.5 336.85" stroke="#fff" stroke-width="0.5" />
<path d="M391.7 336.5L391.7 327" stroke="#fff" stroke-width="0.5" />
<circle cx="391.7" cy="323.9" r="3" fill="#000" stroke="#fff" stroke-width="0.7"/><text x="391.7" y="325.12" font-size="3.4" fill="#fff" text-anchor="middle">P3</text>
<circle cx="403.4" cy="317.2" r="3" fill="#000" stroke="#fff" stroke-width="0.7"/><text x="403.4" y="318.42" font-size="3.4" fill="#fff" text-anchor="middle">P4</text>
<text x="421.5" y="334.5" font-size="4.6" fill="#ffee00" font-style="italic">±6,770</text>
<path d="M421 335.3L433 335.3" stroke="#ffee00" stroke-width="0.35" />
<path d="M397 378.5L427 359.8" stroke="#fff" stroke-width="0.7" fill="none" />
<path d="M399 378.25L400.4 378.58L401.8 376.51L403.2 376.84L404.6 374.76L406 375.09L407.4 373.02L408.8 373.34L410.2 371.27L411.6 371.6L413 369.53L414.4 369.85L415.8 367.78L417.2 368.11L418.6 366.04L420 366.36L421.4 364.29L422.8 364.62L424.2 362.55L425.6 362.87" stroke="#fff" stroke-width="0.5" fill="none" />
<path d="M396.3 362.2L422 346.78" stroke="#fff" stroke-width="0.9" fill="none" />
<path d="M396.3 363.7L422 348.28" stroke="#fff" stroke-width="0.6" fill="none" />
<path d="M398 371.18L422 356.78" stroke="#fff" stroke-width="0.7" fill="none" />
<path d="M398 372.48L422 358.08" stroke="#fff" stroke-width="0.5" fill="none" />
<path d="M402.4 358.54L402.4 368.54" stroke="#fff" stroke-width="0.8" />
<path d="M408.5 354.88L408.5 364.88" stroke="#fff" stroke-width="0.8" />
<path d="M414.6 351.22L414.6 361.22" stroke="#fff" stroke-width="0.8" />
<path d="M420.7 347.56L420.7 357.56" stroke="#fff" stroke-width="0.8" />
<path d="M377.5 373L396.5 373L437.5 396.7L437.5 401.3L436.5 401.3L395.4 379L377.5 379z" stroke="none" stroke-width="0.7" fill="#0a1eff" />
<path d="M379 376L396 376L436.5 399" stroke="#4f6bff" stroke-width="0.4" fill="none" />
<rect x="371.4" y="364.5" width="5.6" height="19.5" fill="#00063a" stroke="#0a1eff" stroke-width="2.1" />
<path d="M370.5 376.5L378 376.5" stroke="#dde" stroke-width="0.5" />
<path d="M370.5 378.5L378 378.5" stroke="#dde" stroke-width="0.5" />
<path d="M396.3 362.1L438 386.2" stroke="#fff" stroke-width="1" fill="none" />
<path d="M396.3 363.5L438 387.6" stroke="#fff" stroke-width="0.6" fill="none" />
<path d="M396.3 371.3L438 395.4" stroke="#fff" stroke-width="0.6" fill="none" />
<path d="M396.3 372.6L438 396.7" stroke="#fff" stroke-width="0.8" fill="none" />
<path d="M396.3 362.1L396.3 372.6" stroke="#fff" stroke-width="0.95" />
<path d="M402.45 365.66L402.45 376.16" stroke="#fff" stroke-width="0.95" />
<path d="M408.6 369.21L408.6 379.71" stroke="#fff" stroke-width="0.95" />
<path d="M414.75 372.76L414.75 383.26" stroke="#fff" stroke-width="0.95" />
<path d="M420.9 376.32L420.9 386.82" stroke="#fff" stroke-width="0.95" />
<path d="M427.05 379.87L427.05 390.37" stroke="#fff" stroke-width="0.95" />
<path d="M433.2 383.43L433.2 393.93" stroke="#fff" stroke-width="0.95" />
<path d="M397.5 362.79L397.5 373.29" stroke="#fff" stroke-width="0.5" />
<path d="M391.7 373L391.7 363.5" stroke="#fff" stroke-width="0.5" />
<circle cx="391.7" cy="360.4" r="3" fill="#000" stroke="#fff" stroke-width="0.7"/><text x="391.7" y="361.62" font-size="3.4" fill="#fff" text-anchor="middle">P3</text>
<circle cx="403.4" cy="353.2" r="3" fill="#000" stroke="#fff" stroke-width="0.7"/><text x="403.4" y="354.42" font-size="3.4" fill="#fff" text-anchor="middle">P4</text>
<text x="421.5" y="371" font-size="4.6" fill="#ffee00" font-style="italic">±3,770</text>
<path d="M421 371.8L433 371.8" stroke="#ffee00" stroke-width="0.35" />
<rect x="431" y="374" width="10.5" height="23" fill="none" stroke="#fff" stroke-width="0.7" />
<rect x="432.2" y="375.2" width="8.1" height="20.6" fill="none" stroke="#fff" stroke-width="0.4" />
<rect x="437" y="396.8" width="46" height="4.4" fill="#0a1eff" stroke="none" stroke-width="0.6" />
<rect x="461" y="401" width="4" height="6" fill="#0a1eff" stroke="none" stroke-width="0.6" />
<path d="M406 400L421 391L421 398L406 407z" stroke="#fff" stroke-width="0.6" fill="none" />
<path d="M410 395.1L410 402.6" stroke="#fff" stroke-width="0.5" />
<path d="M414 392.7L414 400.2" stroke="#fff" stroke-width="0.5" />
<path d="M418 390.3L418 397.8" stroke="#fff" stroke-width="0.5" />
<circle cx="405" cy="390.5" r="3" fill="#000" stroke="#fff" stroke-width="0.7"/><text x="405" y="391.72" font-size="3.4" fill="#fff" text-anchor="middle">P4</text>
<circle cx="394.5" cy="397.5" r="3" fill="#000" stroke="#fff" stroke-width="0.7"/><text x="394.5" y="398.72" font-size="3.4" fill="#fff" text-anchor="middle">P5</text>
<path d="M394.5 400.3L394.5 407" stroke="#fff" stroke-width="0.4" />
<circle cx="514" cy="398" r="3" fill="#000" stroke="#fff" stroke-width="0.7"/><text x="514" y="399.22" font-size="3.4" fill="#fff" text-anchor="middle">P1</text>
<path d="M514 400.8L514 407" stroke="#fff" stroke-width="0.4" />
<circle cx="338" cy="396.5" r="3" fill="#000" stroke="#fff" stroke-width="0.7"/><text x="338" y="397.72" font-size="3.4" fill="#fff" text-anchor="middle">S1</text>
<path d="M338 399.3L338 407" stroke="#fff" stroke-width="0.4" />
<text x="464" y="396" font-size="4" fill="#ffee00" font-style="italic">±0,000</text>
<text x="440" y="389" font-size="4" fill="#ffee00" font-style="italic">±0,000</text>
<rect x="350" y="398" width="21" height="10" fill="none" stroke="#fff" stroke-width="0.6" />
<circle cx="436" cy="102.5" r="2.8" fill="#000" stroke="#fff" stroke-width="0.7"/><text x="436" y="103.72" font-size="3.4" fill="#fff" text-anchor="middle">S5</text>
<path d="M436 105.3L436 108" stroke="#fff" stroke-width="0.4" />
<circle cx="399.5" cy="121" r="2.8" fill="#000" stroke="#fff" stroke-width="0.7"/><text x="399.5" y="122.22" font-size="3.4" fill="#fff" text-anchor="middle">S4</text>
<path d="M392 118L397 120" stroke="#fff" stroke-width="0.4" />
<circle cx="367.5" cy="261" r="2.2" fill="#000" stroke="#fff" stroke-width="0.7"/><text x="367.5" y="262.22" font-size="3.4" fill="#fff" text-anchor="middle">2</text>
<text x="392" y="68.5" font-size="4" fill="#ffee00" font-style="italic">±29,640</text>
<text x="486" y="68.5" font-size="4" fill="#ffee00" font-style="italic">±29,640</text>
<text x="491.5" y="115.5" font-size="4" fill="#ffee00" font-style="italic">±25,270</text>
<circle cx="374.5" cy="273" r="4.600" fill="none" stroke="#ffee00" stroke-width="1"/>
<text x="356" y="276" font-size="7" font-weight="bold" fill="#ffee00">"A"</text>
<circle cx="374.5" cy="327.5" r="4.600" fill="none" stroke="#ffee00" stroke-width="1"/>
<text x="356" y="331" font-size="7" font-weight="bold" fill="#ffee00">"C"</text>
<circle cx="538.5" cy="288" r="4.600" fill="none" stroke="#ffee00" stroke-width="1"/>
<text x="525" y="299.5" font-size="7" font-weight="bold" fill="#ffee00">"B"</text>
<path d="M35 67L175 67L175 76L143 76L143 74L92 74L92 119L49 119L49 73L35 73z" stroke="none" stroke-width="0.7" fill="url(#hW2)" />
<rect x="140" y="75" width="35" height="2.5" fill="url(#grav)" stroke="none" stroke-width="0.6" />
<rect x="93" y="74" width="46.5" height="24.5" fill="url(#hB)" stroke="#ddd" stroke-width="0.5" />
<rect x="139.5" y="74" width="3" height="52" fill="url(#dots)" stroke="none" stroke-width="0.6" />
<rect x="94" y="101" width="6" height="23.5" fill="none" stroke="#d8d820" stroke-width="0.6" />
<rect x="95.5" y="103" width="3" height="19.5" fill="#0a1eff" stroke="#d8d820" stroke-width="0.4" />
<rect x="102" y="101" width="5.5" height="23.5" fill="none" stroke="#d8d820" stroke-width="0.6" />
<rect x="103.5" y="103" width="2.5" height="19.5" fill="#0a1eff" stroke="#d8d820" stroke-width="0.4" />
<rect x="108.5" y="101" width="6.5" height="23.5" fill="none" stroke="#d8d820" stroke-width="0.6" />
<rect x="109" y="101.5" width="5.5" height="22.5" fill="url(#dotsY)" stroke="none" stroke-width="0.6" />
<rect x="116" y="101" width="7" height="23.5" fill="none" stroke="#d8d820" stroke-width="0.6" />
<rect x="117.5" y="103" width="4" height="19.5" fill="#0a1eff" stroke="#d8d820" stroke-width="0.4" />
<rect x="124" y="101" width="6" height="23.5" fill="none" stroke="#d8d820" stroke-width="0.6" />
<rect x="125.5" y="103" width="3" height="19.5" fill="#4a4a4a" stroke="#999" stroke-width="0.4" />
<rect x="131" y="101" width="6.5" height="23.5" fill="none" stroke="#d8d820" stroke-width="0.6" />
<rect x="132.5" y="103" width="3.5" height="19.5" fill="#0a1eff" stroke="#d8d820" stroke-width="0.4" />
<path d="M93 100L139 100" stroke="#ccc" stroke-width="0.4" />
<rect x="93" y="100" width="46.5" height="25.5" fill="none" stroke="#ccc" stroke-width="0.4" />
<path d="M35 74L48.5 74L48.5 119L92 119L92 127.5L143 127.5L143 77L175 77" stroke="#ff1010" stroke-width="2.8" fill="none" />
<path d="M100 126.5L101 123" stroke="#ff9020" stroke-width="0.8" />
<path d="M101 126L101 122" stroke="#30d030" stroke-width="0.8" />
<path d="M104 126.8L116 126.8" stroke="#30e0e0" stroke-width="0.8" />
<path d="M91 128L91 151" stroke="#fff" stroke-width="0.5" />
<path d="M143 128L143 160" stroke="#fff" stroke-width="0.5" />
<path d="M107.5 133L107.5 155" stroke="#fff" stroke-width="0.5" />
<path d="M109.5 133L109.5 155" stroke="#fff" stroke-width="0.5" />
<path d="M111 133L111 155" stroke="#fff" stroke-width="0.5" />
<path d="M113 133L113 155" stroke="#fff" stroke-width="0.5" />
<rect x="107" y="128" width="6.5" height="6" fill="none" stroke="#fff" stroke-width="0.5" />
<path d="M87 151L147 160" stroke="#20c020" stroke-width="0.9" />
<path d="M38 112L70 96" stroke="#fff" stroke-width="0.5" />
<circle cx="36" cy="112.5" r="2.4" fill="#000" stroke="#fff" stroke-width="0.7"/><text x="36" y="113.72" font-size="3.4" fill="#fff" text-anchor="middle">1</text>
<path d="M125 93L146 88.5" stroke="#fff" stroke-width="0.5" />
<circle cx="149" cy="88.5" r="3" fill="#000" stroke="#fff" stroke-width="0.7"/><text x="149" y="89.72" font-size="3.4" fill="#fff" text-anchor="middle">13</text>
<path d="M127 108L147 104" stroke="#fff" stroke-width="0.5" />
<circle cx="150" cy="103.5" r="3" fill="#000" stroke="#fff" stroke-width="0.7"/><text x="150" y="104.72" font-size="3.4" fill="#fff" text-anchor="middle">4</text>
<path d="M86 125L94 124" stroke="#fff" stroke-width="0.5" />
<circle cx="83.5" cy="125" r="3" fill="#000" stroke="#fff" stroke-width="0.7"/><text x="83.5" y="126.22" font-size="3.4" fill="#fff" text-anchor="middle">7</text>
<circle cx="86.5" cy="134.5" r="2.4" fill="#000" stroke="#fff" stroke-width="0.7"/><text x="86.5" y="135.72" font-size="3.4" fill="#fff" text-anchor="middle">8</text>
<circle cx="99.5" cy="134.5" r="2.4" fill="#000" stroke="#fff" stroke-width="0.7"/><text x="99.5" y="135.72" font-size="3.4" fill="#fff" text-anchor="middle">9</text>
<circle cx="121" cy="139.5" r="2.4" fill="#000" stroke="#fff" stroke-width="0.7"/><text x="121" y="140.72" font-size="3.4" fill="#fff" text-anchor="middle">6</text>
<circle cx="126.5" cy="133.5" r="2.4" fill="#000" stroke="#fff" stroke-width="0.7"/><text x="126.5" y="134.72" font-size="3.4" fill="#fff" text-anchor="middle">5</text>
<path d="M110 114L124.5 131.5" stroke="#fff" stroke-width="0.5" />
<path d="M112 128L119.5 137.5" stroke="#fff" stroke-width="0.5" />
<circle cx="154.5" cy="81.5" r="3" fill="#000" stroke="#fff" stroke-width="0.7"/><text x="154.5" y="82.72" font-size="3.4" fill="#fff" text-anchor="middle">22</text>
<rect x="108" y="67" width="7" height="4" fill="none" stroke="#fff" stroke-width="0.5" />
<path d="M155.5 67L171 93" stroke="#fff" stroke-width="0.5" />
<circle cx="177" cy="103" r="11" fill="none" stroke="#ff1010" stroke-width="1.5"/>
<path d="M173 97L173 107.5L179 107.5" stroke="#fff" stroke-width="1" fill="none" />
<path d="M174 106L180 107L178 109z" stroke="#fff" stroke-width="1" fill="#fff" />
<path d="M178 107L183.5 109.5" stroke="#ffa040" stroke-width="0.8" />
<circle cx="180.5" cy="100" r="2.4" fill="#000" stroke="#fff" stroke-width="0.7"/><text x="180.5" y="101.22" font-size="3.4" fill="#fff" text-anchor="middle">16</text>
<path d="M179.5 67L179.5 77" stroke="#ffee00" stroke-width="0.6" />
<path d="M177 77.5L183 77.5" stroke="#ffee00" stroke-width="0.5" />
<path d="M177 74L183 74" stroke="#ffee00" stroke-width="0.5" />
<text x="182" y="75" font-size="3.500" fill="#ffee00" transform="rotate(-90 182 75)">100</text>
<path d="M172 67L172 80" stroke="#fff" stroke-width="0.5" />
<path d="M169 67L169 78" stroke="#fff" stroke-width="0.4" />
<rect x="204" y="67" width="49" height="10" fill="url(#hW2)" stroke="none" stroke-width="0.6" />
<rect x="204" y="73" width="46" height="3.5" fill="url(#grav)" stroke="none" stroke-width="0.6" />
<rect x="209.5" y="67" width="2" height="9" fill="#000" stroke="none" stroke-width="0.6" />
<path d="M210.5 67L210.5 76" stroke="#fff" stroke-width="0.4" />
<rect x="216.5" y="67" width="2" height="9" fill="#000" stroke="none" stroke-width="0.6" />
<path d="M217.5 67L217.5 76" stroke="#fff" stroke-width="0.4" />
<rect x="228.5" y="67" width="2" height="9" fill="#000" stroke="none" stroke-width="0.6" />
<path d="M229.5 67L229.5 76" stroke="#fff" stroke-width="0.4" />
<rect x="232.5" y="67" width="2" height="9" fill="#000" stroke="none" stroke-width="0.6" />
<path d="M233.5 67L233.5 76" stroke="#fff" stroke-width="0.4" />
<rect x="240.5" y="67" width="2" height="9" fill="#000" stroke="none" stroke-width="0.6" />
<path d="M241.5 67L241.5 76" stroke="#fff" stroke-width="0.4" />
<path d="M204 77.5L247.5 77.5L247.5 80L253.5 80L253.5 67" stroke="#ff1010" stroke-width="1.8" fill="none" />
<rect x="255" y="67" width="1.5" height="4" fill="#0a1eff" stroke="none" stroke-width="0.6" />
<path d="M232.5 79L232.5 83L235.5 86L268 86L272 82.5L272 67" stroke="#fff" stroke-width="0.6" fill="none" />
<path d="M238 79L238 81L240 82.5L263 82.5L265.5 80.5L265.5 67" stroke="#fff" stroke-width="0.5" fill="none" />
<circle cx="262.5" cy="68.5" r="3" fill="#000" stroke="#fff" stroke-width="0.7"/><text x="262.5" y="69.72" font-size="3.4" fill="#fff" text-anchor="middle">17</text>
<circle cx="220" cy="83.5" r="3" fill="#000" stroke="#fff" stroke-width="0.7"/><text x="220" y="84.72" font-size="3.4" fill="#fff" text-anchor="middle">18</text>
<circle cx="226.5" cy="89" r="3" fill="#000" stroke="#fff" stroke-width="0.7"/><text x="226.5" y="90.22" font-size="3.4" fill="#fff" text-anchor="middle">20</text>
<path d="M221.5 81L225 78" stroke="#fff" stroke-width="0.4" />
<path d="M227.5 86.5L230 79" stroke="#fff" stroke-width="0.4" />
<g clip-path="url(#cc)">
<rect x="59" y="335.5" width="143" height="37" fill="url(#hW3)" stroke="none" stroke-width="0.6" />
<rect x="148" y="326.5" width="54" height="4" fill="url(#grav)" stroke="none" stroke-width="0.6" />
<rect x="152" y="330.5" width="50" height="4.5" fill="url(#hW3)" stroke="none" stroke-width="0.6" />
<path d="M148 326.5L202 326.5" stroke="#fff" stroke-width="0.5" />
<path d="M150 335L202 335" stroke="#fff" stroke-width="0.6" />
<path d="M125 245L164 245L164 291.5L155 291.5L155 288L153 288L153 280.5L143 280.5L143 275L141 275L141 262L125 262z" stroke="none" stroke-width="0.7" fill="url(#hG)" />
<path d="M141 262L153 262L153 280.5L143 280.5L143 275L141 275z" stroke="none" stroke-width="0.7" fill="url(#hG)" />
<path d="M128 283L141 283L141 292L155 292L155 308L113 308L113 299L119 297L126 294L126 283z" stroke="none" stroke-width="0.7" fill="url(#hG)" />
<path d="M113 308L148 308L148 330L120 330L120 313L113 313z" stroke="none" stroke-width="0.7" fill="url(#hG)" />
<rect x="148" y="308" width="54" height="18.5" fill="url(#hG)" stroke="none" stroke-width="0.6" />
<path d="M125 262L125 245L164 245L164 291.5L155 291.5L155 308L202 308" stroke="#1030ff" stroke-width="0.7" fill="none" stroke-dasharray="1.2 0.8"/>
<path d="M113 299L113 313L120 313L120 330" stroke="#1030ff" stroke-width="0.7" fill="none" stroke-dasharray="1.2 0.8"/>
<path d="M148 326L148 310L202 310" stroke="#dfe" stroke-width="0.4" fill="none" stroke-dasharray="1.2 0.8"/>
<path d="M141.5 283L141.5 330" stroke="#dfe" stroke-width="0.4" stroke-dasharray="1.2 0.8"/>
<rect x="143.5" y="281" width="11" height="7" fill="#000" stroke="none" stroke-width="0.6" />
<rect x="134" y="244" width="15" height="9.5" fill="#000" stroke="#fff" stroke-width="0.8" />
<rect x="136.5" y="245.5" width="10" height="6" fill="#000" stroke="#fff" stroke-width="0.5" />
<circle cx="141.5" cy="248.5" r="2.2" fill="#000" stroke="#fff" stroke-width="0.7"/><text x="141.5" y="249.44" font-size="2.6" fill="#fff" text-anchor="middle">40</text>
<rect x="130" y="253.5" width="24" height="1.5" fill="#ccc" stroke="none" stroke-width="0.6" />
<path d="M138.5 255L138.5 262" stroke="#fff" stroke-width="0.5" />
<path d="M124 255.5L165 255.5" stroke="#fff" stroke-width="0.4" />
<path d="M150 244L154 246L150 247z" stroke="none" stroke-width="0.7" fill="#7fe0c0" />
<path d="M131 244L128 246L131 248z" stroke="none" stroke-width="0.7" fill="#7fe0c0" />
<path d="M124.5 229L124.5 245" stroke="#fff" stroke-width="0.4" />
<path d="M133 229L133 245" stroke="#fff" stroke-width="0.4" />
<path d="M137 229L137 245" stroke="#fff" stroke-width="0.4" />
<path d="M146 229L146 245" stroke="#fff" stroke-width="0.4" />
<path d="M149 229L149 245" stroke="#fff" stroke-width="0.4" />
<path d="M164.5 229L164.5 245" stroke="#fff" stroke-width="0.4" />
<path d="M124 239.5L164.5 239.5" stroke="#20e020" stroke-width="0.5" />
<path d="M124 262.5L164.5 262.5" stroke="#20e020" stroke-width="0.5" />
<text x="143" y="239" font-size="3" fill="#20e020">60</text>
<text x="134.5" y="261.5" font-size="3" fill="#20e020">25</text>
<text x="147.5" y="261.5" font-size="3" fill="#20e020">25</text>
<text x="155" y="250.5" font-size="3" fill="#20e020">25</text>
<text x="162" y="261.5" font-size="3" fill="#20e020">25</text>
<path d="M112 301.5L155 301.5" stroke="#20e020" stroke-width="0.5" />
<path d="M112 304.5L155 304.5" stroke="#20e020" stroke-width="0.5" />
<text x="119" y="301" font-size="3" fill="#20e020">25</text>
<text x="133" y="301" font-size="3" fill="#20e020">25</text>
<text x="147" y="301" font-size="3" fill="#20e020">25</text>
<path d="M110 284L110 292L123 292" stroke="#20e020" stroke-width="0.5" fill="none" />
<path d="M110 286.5L119 286.5" stroke="#20e020" stroke-width="0.5" />
<text x="115.500" y="290.5" font-size="3" fill="#20e020">8</text>
<path d="M105 331L105 312L113 312" stroke="#20e020" stroke-width="0.5" fill="none" />
<path d="M105 322L113 322" stroke="#20e020" stroke-width="0.5" />
<text x="108" y="315.500" font-size="3" fill="#20e020">30</text>
<text x="103" y="323.500" font-size="3" fill="#20e020">20</text>
<path d="M182 308L182 327" stroke="#20e020" stroke-width="0.5" fill="none" />
<text x="180" y="320" font-size="3" fill="#20e020">4</text>
<rect x="148" y="310" width="8" height="6.5" fill="#123a22" stroke="#20e020" stroke-width="0.4" />
<text x="149.500" y="315.500" font-size="3" fill="#20e020">113</text>
<path d="M113 299L126 294.5L126 299z" stroke="none" stroke-width="0.7" fill="#b06a10" />
<rect x="113" y="299" width="13" height="3" fill="#8a5a10" stroke="none" stroke-width="0.6" />
<path d="M139 268L142.5 268L142.5 280L141 280L141 275L139 273z" stroke="none" stroke-width="0.7" fill="#ffe000" />
<rect x="154" y="288" width="2" height="2.5" fill="#ffe000" stroke="none" stroke-width="0.6" />
<path d="M107 303L106.5 299.5L108.5 297.5L125 294.5L125.5 287L131.5 283L138.5 282.5L139 274" stroke="#2a50ff" stroke-width="1.3" fill="none" />
<path d="M121 289L121 275L126 269.5L130.5 267.5" stroke="#6fd0ff" stroke-width="1.2" fill="none" />
<path d="M122.5 286L130 286L130 282L140 281" stroke="#cfe8ff" stroke-width="0.7" fill="none" />
<path d="M130 268L132 272L136 272L137 268" stroke="#888" stroke-width="1.2" fill="none" />
<rect x="133" y="283" width="2.5" height="6" fill="#9fd" stroke="none" stroke-width="0.6" />
<path d="M118.5 320.5L127.5 320.5" stroke="#fff" stroke-width="0.5" />
<path d="M120 324L134.5 324" stroke="#fff" stroke-width="0.5" />
<path d="M134 318L134 331" stroke="#fff" stroke-width="0.5" />
<circle cx="109.5" cy="321.5" r="3" fill="#000" stroke="#fff" stroke-width="0.7"/><text x="109.5" y="322.72" font-size="3.4" fill="#fff" text-anchor="middle">9</text>
<rect x="99" y="331.5" width="19" height="3.5" fill="url(#dots)" stroke="none" stroke-width="0.6" />
<rect x="126" y="331.5" width="18" height="3.5" fill="#173" stroke="#9d9" stroke-width="0.3" />
<path d="M127 334.5L129 332L131 334.5L133 332L135 334.5L137 332L139 334.5L141 332L143 334.5" stroke="#bfb" stroke-width="0.4" fill="none" />
<ellipse cx="121" cy="333.2" rx="4.600" ry="2.700" fill="#ffe000"/><ellipse cx="148" cy="333.2" rx="4.600" ry="2.700" fill="#ffe000"/>
<path d="M68 333.5L99 333.5" stroke="#1030ff" stroke-width="0.9" />
<path d="M59 335.5L202 335.5" stroke="#fff" stroke-width="0.7" />
<path d="M171 335.5L171 353" stroke="#fff" stroke-width="0.9" />
<path d="M169.5 338L172.5 339" stroke="#fff" stroke-width="0.4" />
<path d="M169.5 340L172.5 341" stroke="#fff" stroke-width="0.4" />
<path d="M169.5 342L172.5 343" stroke="#fff" stroke-width="0.4" />
<path d="M169.5 344L172.5 345" stroke="#fff" stroke-width="0.4" />
<path d="M169.5 346L172.5 347" stroke="#fff" stroke-width="0.4" />
<path d="M169.5 348L172.5 349" stroke="#fff" stroke-width="0.4" />
<path d="M169.5 350L172.5 351" stroke="#fff" stroke-width="0.4" />
</g>
<circle cx="130.5" cy="300.5" r="71.5" fill="none" stroke="#fff" stroke-width="0.7"/>
<path d="M118.5 234.5L127 243" stroke="#fff" stroke-width="0.45" />
<circle cx="118.5" cy="234.5" r="2.5" fill="#000" stroke="#fff" stroke-width="0.7"/><text x="118.5" y="235.51" font-size="2.8" fill="#fff" text-anchor="middle">39</text>
<path d="M114.5 240L130 249" stroke="#fff" stroke-width="0.45" />
<circle cx="114.5" cy="240" r="2.5" fill="#000" stroke="#fff" stroke-width="0.7"/><text x="114.5" y="241.01" font-size="2.8" fill="#fff" text-anchor="middle">38</text>
<path d="M114.5 250L133 254" stroke="#fff" stroke-width="0.45" />
<circle cx="114.5" cy="250" r="2.5" fill="#000" stroke="#fff" stroke-width="0.7"/><text x="114.5" y="251.01" font-size="2.8" fill="#fff" text-anchor="middle">37</text>
<path d="M113.5 257.5L128 264" stroke="#fff" stroke-width="0.45" />
<circle cx="113.5" cy="257.5" r="2.5" fill="#000" stroke="#fff" stroke-width="0.7"/><text x="113.5" y="258.51" font-size="2.8" fill="#fff" text-anchor="middle">36</text>
<path d="M113.5 264.5L130 267" stroke="#fff" stroke-width="0.45" />
<circle cx="113.5" cy="264.5" r="2.5" fill="#000" stroke="#fff" stroke-width="0.7"/><text x="113.5" y="265.51" font-size="2.8" fill="#fff" text-anchor="middle">35</text>
<path d="M105.5 269L131 277" stroke="#fff" stroke-width="0.45" />
<circle cx="105.5" cy="269" r="2.5" fill="#000" stroke="#fff" stroke-width="0.7"/><text x="105.5" y="270.01" font-size="2.8" fill="#fff" text-anchor="middle">34</text>
<path d="M106.5 281L120 285" stroke="#fff" stroke-width="0.45" />
<circle cx="106.5" cy="281" r="2.5" fill="#000" stroke="#fff" stroke-width="0.7"/><text x="106.5" y="282.01" font-size="2.8" fill="#fff" text-anchor="middle">33</text>
<path d="M161.5 300L155 291" stroke="#fff" stroke-width="0.45" />
<circle cx="161.5" cy="300" r="2.5" fill="#000" stroke="#fff" stroke-width="0.7"/><text x="161.5" y="301.01" font-size="2.8" fill="#fff" text-anchor="middle">41</text>
<path d="M176.5 298L176.5 318" stroke="#fff" stroke-width="0.45" />
<circle cx="176.5" cy="298" r="2.5" fill="#000" stroke="#fff" stroke-width="0.7"/><text x="176.5" y="299.01" font-size="2.8" fill="#fff" text-anchor="middle">24</text>
<circle cx="140.5" cy="234" r="2.5" fill="#000" stroke="#fff" stroke-width="0.7"/><text x="140.5" y="235.01" font-size="2.8" fill="#fff" text-anchor="middle">42</text>
<path d="M76.5 323L84 332.5" stroke="#fff" stroke-width="0.45" />
<circle cx="76.5" cy="323" r="2.5" fill="#000" stroke="#fff" stroke-width="0.7"/><text x="76.5" y="324.01" font-size="2.8" fill="#fff" text-anchor="middle">34</text>
<path d="M89 321L94 331" stroke="#fff" stroke-width="0.45" />
<circle cx="89" cy="321" r="2.5" fill="#000" stroke="#fff" stroke-width="0.7"/><text x="89" y="322.01" font-size="2.8" fill="#fff" text-anchor="middle">32</text>
<path d="M63.5 358L112 337" stroke="#fff" stroke-width="0.45" />
<circle cx="63.5" cy="358" r="2.5" fill="#000" stroke="#fff" stroke-width="0.7"/><text x="63.5" y="359.01" font-size="2.8" fill="#fff" text-anchor="middle">43</text>
<path d="M150.5 376.5L135 358" stroke="#fff" stroke-width="0.45" />
<circle cx="150.5" cy="376.5" r="2.5" fill="#000" stroke="#fff" stroke-width="0.7"/><text x="150.5" y="377.51" font-size="2.8" fill="#fff" text-anchor="middle">31</text>
<path d="M199 341L179 333" stroke="#fff" stroke-width="0.45" />
<circle cx="199" cy="341" r="2.5" fill="#000" stroke="#fff" stroke-width="0.7"/><text x="199" y="342.01" font-size="2.8" fill="#fff" text-anchor="middle">30</text>
<path d="M193 349.5L182 336" stroke="#fff" stroke-width="0.45" />
<circle cx="193" cy="349.5" r="2.5" fill="#000" stroke="#fff" stroke-width="0.7"/><text x="193" y="350.51" font-size="2.8" fill="#fff" text-anchor="middle">8</text>
<path d="M185.5 356L172.5 346" stroke="#fff" stroke-width="0.45" />
<circle cx="185.5" cy="356" r="2.5" fill="#000" stroke="#fff" stroke-width="0.7"/><text x="185.5" y="357.01" font-size="2.8" fill="#fff" text-anchor="middle">7</text>
<path d="M208 329L150 329" stroke="#fff" stroke-width="0.45" />
<circle cx="208" cy="329" r="2.5" fill="#000" stroke="#fff" stroke-width="0.7"/><text x="208" y="330.01" font-size="2.8" fill="#fff" text-anchor="middle">22</text>
<text x="44" y="199.5" font-size="13.3" font-weight="bold" fill="#ffee00" textLength="103" lengthAdjust="spacingAndGlyphs" xml:space="preserve">DETAIL "C"  M 1:10</text>
<path d="M173.5 186L273.5 186" stroke="#c01010" stroke-width="0.8" />
<path d="M223.5 137L223.5 235" stroke="#10a010" stroke-width="0.8" />
<rect x="222" y="184.5" width="3" height="3" fill="#000" stroke="#ddd" stroke-width="0.5" />
<path d="M616 257.5L620 257.5" stroke="#e06060" stroke-width="0.8" />
</svg>
<div class="abs" style="left:623px;top:67px;width:10px;height:381.500px;background:linear-gradient(90deg,#dcdcdc,#fafafa 40%,#f4f4f4 70%,#e0e0e0)"></div>
<div class="abs" style="left:624px;top:68.5px;width:8px;height:365px;border-radius:4px;background:linear-gradient(90deg,#e0e0e0,#fdfdfd 45%,#f1f1f1);border:0.5px solid #cfcfcf"></div>
<div class="abs" style="left:623.8px;top:329.3px;width:7px;height:10px;border-radius:3px;background:linear-gradient(90deg,#7f97b6,#dfe9f5 45%,#a9bcd4 80%,#6f87a6);border:0.6px solid #53657e"></div>
<svg class="abs" style="left:623px;top:433px" width="10" height="16" viewBox="0 0 10 16"><rect width="10" height="16" fill="#f1f1f1"/><path d="M5 2.500L7 5.500H3z M5 13L7 10H3z" fill="#555"/><path d="M1.500 7.800H8.500" stroke="#c8c8c8" stroke-width=".5"/></svg>
<div class="abs" style="left:35px;top:448.5px;width:598.5px;height:11px;background:linear-gradient(#ececec,#e0e0e0)"></div>
<div class="abs" style="left:437px;top:449.3px;width:166px;height:7px;border-radius:3.500px;background:linear-gradient(#dedede,#fcfcfc 50%,#f0f0f0);border:0.5px solid #c9c9c9"></div>
<div class="abs" style="left:597px;top:449px;width:11px;height:7.500px;border-radius:3.500px;background:linear-gradient(#6f87a8,#e6eef8 50%,#b8c8dc 80%,#7f97b6);border:0.6px solid #53657e"></div>
<svg class="abs" style="left:608px;top:449px" width="15" height="8" viewBox="0 0 15 8"><rect width="15" height="8" fill="#f3f3f3"/><path d="M2.500 4L5 2.300V5.700z M12 4L9.500 2.300V5.700z" fill="#555"/><path d="M7.300 1V7" stroke="#c8c8c8" stroke-width=".5"/></svg>
<div class="abs" style="left:36.5px;top:449px;width:66px;height:9.500px;border:0.5px solid #8d8d8d;border-top:0;border-radius:0 0 3px 3px;background:linear-gradient(#f6f6f6,#e4e4e4);box-shadow:0 0.5px 1px rgba(0,0,0,.3)"></div>
<div class="abs" style="left:37px;top:449px;width:28.600px;height:9px;border-radius:0 0 0 3px;background:linear-gradient(#d2d8e0,#bcc4cf);border-right:0.5px solid #8d8d8d"></div>
<span class="t " style="left:41.5px;top:450px;font-size:6.3px;transform:scaleX(0.979);transform-origin:0 0;font-family:'DejaVu Sans','Liberation Sans',sans-serif">Model</span>
<span class="t " style="left:71.9px;top:450px;font-size:6.3px;transform:scaleX(0.932);transform-origin:0 0;font-family:'DejaVu Sans','Liberation Sans',sans-serif">Layout1</span>
<div class="abs" style="left:633.5px;top:56.5px;width:166.500px;height:403px;background:#e9e9e9;border-left:0.7px solid #9a9a9a"></div>
<div class="abs" style="left:634px;top:56.5px;width:166px;height:12px;background:linear-gradient(#dedede,#c6c6c6);border-bottom:0.5px solid #a8a8a8"></div>
<span class="t " style="left:693.8px;top:60.2px;font-size:5.8px;transform:scaleX(0.881);transform-origin:0 0;font-family:'DejaVu Sans','Liberation Sans',sans-serif">Properties</span>
<svg class="abs" style="left:781.2px;top:58.8px" width="7" height="7" viewBox="0 0 12 12"><circle cx="6" cy="6" r="5.500" fill="#3a3a3a"/><circle cx="6" cy="6" r="2.600" fill="none" stroke="#eee" stroke-width="1.400"/><path d="M6 3.500V6" stroke="#eee" stroke-width="1.200"/></svg>
<svg class="abs" style="left:791.5px;top:58.8px" width="7" height="7" viewBox="0 0 12 12"><circle cx="6" cy="6" r="5.500" fill="#3a3a3a"/><path d="M3.800 3.800L8.200 8.200M8.200 3.800L3.800 8.200" stroke="#eee" stroke-width="1.600"/></svg>
<div class="abs" style="left:639px;top:89.5px;width:155.500px;height:354px;background:#eeeeee;border:0.6px solid #cdcdcd"></div>
<div class="combo" style="left:639.2px;top:75.8px;width:109.2px;height:10.4px"><div class="stepper"></div></div>
<span class="t " style="left:642.8px;top:77.6px;font-size:6.5px;transform:scaleX(0.925);transform-origin:0 0;font-family:'DejaVu Sans','Liberation Sans',sans-serif">No Selection</span>
<div class="abs" style="left:751.4px;top:74.2px;width:12.400px;height:12.200px;border:0.6px solid #cfcfcf;background:#f2f2f2"></div>
<div class="abs" style="left:767.2px;top:74.2px;width:12.400px;height:12.200px;border:0.6px solid #cfcfcf;background:#f2f2f2"></div>
<div class="abs" style="left:782.4px;top:74.2px;width:12.400px;height:12.200px;border:0.6px solid #cfcfcf;background:#f2f2f2"></div>
<span class="t " style="left:650.8px;top:93.7px;font-size:5.6px;transform:scaleX(0.875);transform-origin:0 0;font-family:'DejaVu Sans','Liberation Sans',sans-serif">General</span><div class="group" style="left:645.5px;top:100px;width:142.300px;height:77.30000000000001px"></div>
<span class="t " style="left:650.8px;top:181.5px;font-size:5.6px;transform:scaleX(0.891);transform-origin:0 0;font-family:'DejaVu Sans','Liberation Sans',sans-serif">PrintStyle</span><div class="group" style="left:645.5px;top:187.8px;width:142.300px;height:44.0px"></div>
<span class="t " style="left:650.8px;top:236.89999999999998px;font-size:5.6px;transform:scaleX(0.866);transform-origin:0 0;font-family:'DejaVu Sans','Liberation Sans',sans-serif">View</span><div class="group" style="left:645.5px;top:243.2px;width:142.300px;height:66.10000000000002px"></div>
<span class="t " style="left:650.8px;top:314.09999999999997px;font-size:5.6px;transform:scaleX(0.889);transform-origin:0 0;font-family:'DejaVu Sans','Liberation Sans',sans-serif">Misc</span><div class="group" style="left:645.5px;top:320.4px;width:142.300px;height:55.0px"></div>
<svg class="abs" style="left:752.6px;top:75.3px" width="10" height="10" viewBox="0 0 10 10"><path d="M2 2H6V7H2z" fill="#bbb" stroke="#555" stroke-width=".6"/><path d="M5 4.500L8.500 7.500L7 7.700L7.800 9.300" fill="none" stroke="#222" stroke-width=".8"/></svg>
<svg class="abs" style="left:768.4px;top:75.3px" width="10" height="10" viewBox="0 0 10 10"><rect x="1.500" y="1.500" width="5.500" height="4.500" fill="#ddd" stroke="#333" stroke-width=".9"/><path d="M5.500 5L8.500 8L7.200 8.200L8 9.500" fill="none" stroke="#222" stroke-width=".8"/></svg>
<svg class="abs" style="left:783.6px;top:75.3px" width="10" height="10" viewBox="0 0 10 10"><rect x="2" y="1.500" width="4.500" height="3.800" fill="#bbb" stroke="#444" stroke-width=".7"/><path d="M7.500 2L5 6H6.800L5.500 9.500L8.800 4.800H7z" fill="#f0c020" stroke="#b08a10" stroke-width=".3"/></svg>
<svg class="abs" style="left:653.3px;top:107.3px" width="10" height="10" viewBox="0 0 10 10"><circle cx="5" cy="4.500" r="3.600" fill="#2a6ad0"/><path d="M3 3C4 1.500 6 2 6.500 3.500C7 5 5 5.500 4.500 7C3.500 6.500 2.500 4.500 3 3z" fill="#38c040"/><rect x="3" y="7.500" width="4.500" height="1.800" fill="#444"/></svg>
<svg class="abs" style="left:653.3px;top:118.8px" width="10" height="10" viewBox="0 0 10 10"><path d="M1 5.500L3.500 3.500H9.500L7.500 5.500V7.500H1z" fill="#d8d070" stroke="#a8a040" stroke-width=".4"/><path d="M7.500 5.500L9.500 3.500V5.500L7.500 7.500z" fill="#b8b050"/></svg>
<svg class="abs" style="left:653.3px;top:129.7px" width="10" height="10" viewBox="0 0 10 10"><circle cx="4" cy="4" r="2.600" fill="#dde" stroke="#2040a0" stroke-width=".8"/><path d="M2 8.500C4 9.500 6 9 7 8" fill="none" stroke="#2040a0" stroke-width=".9"/><path d="M8.500 1.500L6 7.500L5.300 8.700L5.500 7z" fill="#e8a020" stroke="#a06a10" stroke-width=".3"/></svg>
<svg class="abs" style="left:653.3px;top:140.2px" width="10" height="10" viewBox="0 0 10 10"><path d="M1.500 2H8.500M1.500 8.500H8.500" stroke="#222" stroke-width="1.100"/><path d="M1.500 4H8.500M1.500 6.300H8.500" stroke="#222" stroke-width="1" stroke-dasharray="1.800 .8"/><path d="M5 1V3.500" stroke="#222" stroke-width="1.200"/></svg>
<svg class="abs" style="left:653.3px;top:151.0px" width="10" height="10" viewBox="0 0 10 10"><rect x="1.500" y="1.500" width="7" height="7.300" fill="#eee" stroke="#222" stroke-width=".8"/><path d="M1.500 3.300H8.500" stroke="#222" stroke-width="1.200"/><path d="M2.500 5.500H7.500M2.500 7.300H7.500" stroke="#222" stroke-width=".8" stroke-dasharray="1.300 .7"/></svg>
<svg class="abs" style="left:653.3px;top:161.5px" width="10" height="10" viewBox="0 0 10 10"><path d="M1.500 2H8.500" stroke="#111" stroke-width="1.600"/><path d="M1.500 4.300H8.500" stroke="#111" stroke-width="1.300"/><path d="M1.500 6.300H8.500" stroke="#111" stroke-width="1"/><path d="M1.500 8.200H8.500" stroke="#111" stroke-width=".8"/></svg>
<svg class="abs" style="left:653.3px;top:195.3px" width="10" height="10" viewBox="0 0 10 10"><rect x="1.500" y="3" width="5.500" height="6" fill="#f4f4f4" stroke="#222" stroke-width=".8"/><path d="M2 7.500H6.500" stroke="#222" stroke-width="1.400"/><path d="M8.800 1.200L4.500 6L4 7L5 6.600z" fill="#e8a020" stroke="#805010" stroke-width=".3"/></svg>
<svg class="abs" style="left:653.3px;top:206.0px" width="10" height="10" viewBox="0 0 10 10"><rect x="1.500" y="1.500" width="2.300" height="7.500" fill="#e83030"/><rect x="3.800" y="1.500" width="2.300" height="7.500" fill="#30c040"/><rect x="6.100" y="1.500" width="2.300" height="7.500" fill="#3060e8"/><path d="M2.600 1.500V9M5 1.500V9M7.300 1.500V9" stroke="#fff" stroke-width=".3" stroke-dasharray=".6 .6"/></svg>
<svg class="abs" style="left:653.3px;top:216.0px" width="10" height="10" viewBox="0 0 10 10"><rect x="1.500" y="1.500" width="7.300" height="7.500" fill="#f0f0f0" stroke="#888" stroke-width=".3"/><path d="M1.500 1.500H4V9H1.500z" fill="#e83030"/><path d="M4 1.500H6L4 5z" fill="#30c040"/><path d="M1.500 9L8.800 3V9z" fill="#111"/></svg>
<svg class="abs" style="left:653.3px;top:250.6px" width="10" height="10" viewBox="0 0 10 10"><path d="M8 3A3.600 3.600 0 1 0 8.500 6" fill="none" stroke="#333" stroke-width=".8"/><circle cx="5" cy="5" r=".9" fill="#d0b000"/><rect x="7" y="7" width="1.800" height="1.800" fill="#222"/></svg>
<svg class="abs" style="left:653.3px;top:261.2px" width="10" height="10" viewBox="0 0 10 10"><path d="M8 3A3.600 3.600 0 1 0 8.500 6" fill="none" stroke="#333" stroke-width=".8"/><circle cx="5" cy="5" r=".9" fill="#d0b000"/><rect x="7" y="7" width="1.800" height="1.800" fill="#222"/></svg>
<svg class="abs" style="left:653.3px;top:271.8px" width="10" height="10" viewBox="0 0 10 10"><path d="M8 3A3.600 3.600 0 1 0 8.500 6" fill="none" stroke="#333" stroke-width=".8"/><circle cx="5" cy="5" r=".9" fill="#d0b000"/><rect x="7" y="7" width="1.800" height="1.800" fill="#222"/></svg>
<svg class="abs" style="left:653.3px;top:282.4px" width="10" height="10" viewBox="0 0 10 10"><path d="M5 1.500V8.500" stroke="#2060e0" stroke-width="1"/><path d="M2.500 1.500H7.500M2.500 8.500H7.500" stroke="#2060e0" stroke-width="1"/><path d="M5 1.800L3.800 3.500H6.200zM5 8.200L3.800 6.500H6.200z" fill="#2060e0"/></svg>
<svg class="abs" style="left:653.3px;top:292.8px" width="10" height="10" viewBox="0 0 10 10"><path d="M1.500 5H8.500" stroke="#2060e0" stroke-width="1"/><path d="M1.500 2V8M8.500 2V8" stroke="#2060e0" stroke-width="1"/><path d="M1.800 5L3.500 3.800V6.200zM8.200 5L6.500 3.800V6.200z" fill="#2060e0"/></svg>
<svg class="abs" style="left:653.3px;top:327.2px" width="10" height="10" viewBox="0 0 10 10"><rect x="1" y="1" width="8" height="8" fill="#c9d6ee" stroke="#c8b84a" stroke-width=".8"/><path d="M4 7V3.500M4 7H7M4 3.500L3 4.800M7 7L5.800 6" stroke="#2040c0" stroke-width=".8" fill="none"/></svg>
<svg class="abs" style="left:653.3px;top:338.2px" width="10" height="10" viewBox="0 0 10 10"><path d="M4 1.500V6.500H8.500M4 6.500L1.500 8.800" stroke="#111" stroke-width="1.100" fill="none"/><path d="M4 .8L2.800 2.800H5.200z" fill="#111"/><circle cx="7.500" cy="8.500" r=".6" fill="#111"/></svg>
<svg class="abs" style="left:653.3px;top:348.7px" width="10" height="10" viewBox="0 0 10 10"><path d="M4 1.500V6.500H8.500M4 6.500L1.500 8.800" stroke="#111" stroke-width="1.100" fill="none"/><path d="M4 .8L2.800 2.800H5.200z" fill="#111"/></svg>
<svg class="abs" style="left:653.3px;top:359.2px" width="10" height="10" viewBox="0 0 10 10"><rect x="1.500" y="2.500" width="7.500" height="6.500" fill="#e8e0d0" stroke="#b0a080" stroke-width=".5"/><path d="M1.500 5L4 3L6 4.500L9 2.500V5z" fill="#e08030"/></svg>
<div class="wfield" style="left:667.8px;top:107.3px;width:113px;height:10px"></div>
<div class="combo" style="left:667.8px;top:119.6px;width:113px;height:8.8px"><div class="stepper"></div></div>
<span class="t " style="left:672px;top:120.3px;font-size:6px;font-family:'DejaVu Sans','Liberation Sans',sans-serif">_</span>
<div class="combo" style="left:667.8px;top:130px;width:113px;height:9.2px"><div class="stepper"></div></div>
<div class="abs" style="left:673.5px;top:132.2px;width:4.800px;height:4.800px;border-radius:50%;border:0.6px solid #222;background:#fff"></div>
<span class="t " style="left:681.8px;top:131.2px;font-size:6.5px;transform:scaleX(0.832);transform-origin:0 0;font-family:'DejaVu Sans','Liberation Sans',sans-serif">ByLayer</span>
<div class="wfield" style="left:667.8px;top:140.6px;width:113px;height:9.200px"></div>
<span class="t " style="left:669.7px;top:141.6px;font-size:6.5px;transform:scaleX(0.923);transform-origin:0 0;font-family:'DejaVu Sans','Liberation Sans',sans-serif">1.0000</span>
<div class="combo" style="left:667.8px;top:151.6px;width:113px;height:8.8px"><div class="stepper"></div></div>
<span class="t " style="left:671.8px;top:152.5px;font-size:6.5px;transform:scaleX(0.870);transform-origin:0 0;font-family:'DejaVu Sans','Liberation Sans',sans-serif">ByLayer</span>
<span class="t " style="left:704.7px;top:152.5px;font-size:6.5px;transform:scaleX(0.921);transform-origin:0 0;font-family:'DejaVu Sans','Liberation Sans',sans-serif">Solid line</span>
<div class="combo" style="left:667.8px;top:162px;width:113px;height:9px"><div class="stepper"></div></div>
<div class="abs" style="left:671.5px;top:166.4px;width:17px;height:0.7px;background:#333"></div>
<span class="t " style="left:689px;top:163.1px;font-size:6.5px;transform:scaleX(0.851);transform-origin:0 0;font-family:'DejaVu Sans','Liberation Sans',sans-serif">ByLayer</span>
<div class="combo" style="left:667.8px;top:195.7px;width:113px;height:9.3px"><div class="stepper"></div></div>
<span class="t " style="left:671.8px;top:196.9px;font-size:6.5px;transform:scaleX(0.938);transform-origin:0 0;font-family:'DejaVu Sans','Liberation Sans',sans-serif">monochrome.ctb</span>
<div class="combo" style="left:667.8px;top:206.7px;width:113px;height:8.800px;background:#eeeeee;border-color:#c8c8c8;box-shadow:none"></div>
<svg class="abs" style="left:773px;top:208px" width="4" height="6" viewBox="0 0 4 6"><path d="M2 0.500L3.500 2.300H0.500z M2 5.500L3.500 3.700H0.500z" fill="#666"/></svg>
<span class="t " style="left:671.8px;top:207.7px;font-size:6.5px;transform:scaleX(0.910);transform-origin:0 0;font-family:'DejaVu Sans','Liberation Sans',sans-serif;color:#929292">ByColor</span>
<div class="field" style="left:668.2px;top:217.2px;width:111.700px;height:7.300px"></div>
<span class="t " style="left:669.7px;top:218px;font-size:6.5px;transform:scaleX(0.902);transform-origin:0 0;font-family:'DejaVu Sans','Liberation Sans',sans-serif">None</span>
<div class="field" style="left:668.2px;top:252px;width:111.700px;height:7.300px"></div>
<span class="t " style="left:669.7px;top:252.9px;font-size:6.5px;transform:scaleX(0.951);transform-origin:0 0;font-family:'DejaVu Sans','Liberation Sans',sans-serif">113639.8426</span>
<div class="field" style="left:668.2px;top:262.5px;width:111.700px;height:7.300px"></div>
<span class="t " style="left:669.7px;top:263.4px;font-size:6.5px;transform:scaleX(0.961);transform-origin:0 0;font-family:'DejaVu Sans','Liberation Sans',sans-serif">6423.3932</span>
<div class="field" style="left:668.2px;top:273.1px;width:111.700px;height:7.300px"></div>
<span class="t " style="left:669.7px;top:274.0px;font-size:6.5px;transform:scaleX(0.990);transform-origin:0 0;font-family:'DejaVu Sans','Liberation Sans',sans-serif">0.0000</span>
<div class="field" style="left:668.2px;top:283.7px;width:111.700px;height:7.300px"></div>
<span class="t " style="left:669.7px;top:284.59999999999997px;font-size:6.5px;transform:scaleX(0.961);transform-origin:0 0;font-family:'DejaVu Sans','Liberation Sans',sans-serif">3636.5208</span>
<div class="field" style="left:668.2px;top:294.1px;width:111.700px;height:7.300px"></div>
<span class="t " style="left:669.7px;top:295.0px;font-size:6.5px;transform:scaleX(0.961);transform-origin:0 0;font-family:'DejaVu Sans','Liberation Sans',sans-serif">5592.8769</span>
<div class="combo" style="left:667.8px;top:327.7px;width:113px;height:9px"><div class="stepper"></div></div>
<span class="t " style="left:671.8px;top:329.4px;font-size:6.5px;transform:scaleX(0.905);transform-origin:0 0;font-family:'DejaVu Sans','Liberation Sans',sans-serif">Yes</span>
<div class="combo" style="left:667.8px;top:338.7px;width:113px;height:9px"><div class="stepper"></div></div>
<span class="t " style="left:671.8px;top:340.4px;font-size:6.5px;transform:scaleX(0.905);transform-origin:0 0;font-family:'DejaVu Sans','Liberation Sans',sans-serif">No</span>
<div class="combo" style="left:667.8px;top:349.2px;width:113px;height:9px"><div class="stepper"></div></div>
<span class="t " style="left:671.8px;top:350.9px;font-size:6.5px;transform:scaleX(0.905);transform-origin:0 0;font-family:'DejaVu Sans','Liberation Sans',sans-serif">No</span>
<div class="field" style="left:668.2px;top:360.2px;width:111.700px;height:7.800px"></div>
<div class="abs" style="left:634px;top:447.5px;width:166px;height:12px;background:#e6e6e6;border-top:0.5px solid #c8c8c8"></div>
<div class="abs" style="left:673.5px;top:449.3px;width:87px;height:9.600px;border:0.5px solid #8d8d8d;border-radius:2px;background:linear-gradient(#fcfcfc,#e8e8e8);box-shadow:0 0.5px 1px rgba(0,0,0,.3)"></div>
<div class="abs" style="left:719px;top:449.8px;width:41px;height:8.600px;border-radius:0 2px 2px 0;background:linear-gradient(#cfd5dd,#b7bec9);border-left:0.5px solid #8d8d8d"></div>
<span class="t " style="left:678.1px;top:450.6px;font-size:6.5px;transform:scaleX(0.989);transform-origin:0 0;font-family:'DejaVu Sans','Liberation Sans',sans-serif">Tool Matrix</span>
<span class="t " style="left:724.9px;top:450.6px;font-size:6.5px;transform:scaleX(0.934);transform-origin:0 0;font-family:'DejaVu Sans','Liberation Sans',sans-serif">Properties</span>
<div class="abs" style="left:35px;top:459.5px;width:765px;height:12.500px;background:linear-gradient(#dcdcdc,#c4c4c4);border-top:0.5px solid #a0a0a0;border-bottom:0.5px solid #a6a6a6"></div>
<span class="t " style="left:383px;top:463px;font-size:5.8px;transform:scaleX(0.895);transform-origin:0 0;font-family:'DejaVu Sans','Liberation Sans',sans-serif">Command window</span>
<svg class="abs" style="left:781.2px;top:462.2px" width="7" height="7" viewBox="0 0 12 12"><circle cx="6" cy="6" r="5.500" fill="#3a3a3a"/><circle cx="6" cy="6" r="2.600" fill="none" stroke="#eee" stroke-width="1.400"/><path d="M6 3.500V6" stroke="#eee" stroke-width="1.200"/></svg>
<svg class="abs" style="left:791.2px;top:462.2px" width="7" height="7" viewBox="0 0 12 12"><circle cx="6" cy="6" r="5.500" fill="#3a3a3a"/><path d="M3.800 3.800L8.200 8.200M8.200 3.800L3.800 8.200" stroke="#eee" stroke-width="1.600"/></svg>
<div class="abs" style="left:35px;top:472.5px;width:765px;height:32.500px;background:#e9e9e9"></div>
<div class="abs" style="left:35.5px;top:472.5px;width:764.500px;height:21.500px;background:#fff"></div>
<div class="abs" style="left:792px;top:472.5px;width:8px;height:21.500px;background:linear-gradient(90deg,#e2e2e2,#fafafa 50%,#f0f0f0)"></div>
<div class="abs" style="left:35.5px;top:495.5px;width:764.500px;height:8.500px;background:#fff"></div>
<span class="t " style="left:38.1px;top:475.5px;font-size:6.4px;transform:scaleX(0.865);transform-origin:0 0;font-family:'DejaVu Sans','Liberation Sans',sans-serif;font-weight:bold">Command:</span>
<span class="t " style="left:36.9px;top:496.7px;font-size:6.4px;transform:scaleX(0.878);transform-origin:0 0;font-family:'DejaVu Sans','Liberation Sans',sans-serif;font-weight:bold">Command:</span>
<div class="abs" style="left:0;top:505px;width:800px;height:15px;background:linear-gradient(#efefef,#e4e4e4);border-top:0.7px solid #b4b4b4;border-bottom:0.7px solid #bdbdbd"></div>
<div class="abs" style="left:0;top:520px;width:800px;height:4px;background:#f0f0f0"></div>
<div class="abs" style="left:1px;top:506px;width:280.500px;height:14px;border:0.6px solid #cfcfcf;background:#ececec"></div>
<div class="abs" style="left:502.5px;top:506px;width:282.500px;height:14px;border:0.6px solid #cfcfcf;background:#ececec"></div>
<div class="abs" style="left:0;top:522.5px;width:800px;height:1.500px;background:#d8d8d8"></div>
<div class="btn" style="left:286.3px;width:20.0px"></div>
<span class="t " style="left:290.5px;top:510.7px;font-size:5.6px;transform:scaleX(0.852);transform-origin:0 0;font-family:'DejaVu Sans','Liberation Sans',sans-serif">Snap</span>
<div class="btn" style="left:311.3px;width:19.5px"></div>
<span class="t " style="left:315px;top:510.7px;font-size:5.6px;transform:scaleX(1.021);transform-origin:0 0;font-family:'DejaVu Sans','Liberation Sans',sans-serif">Grid</span>
<div class="btn on" style="left:334.5px;width:24.30000000000001px"></div>
<span class="t " style="left:339.3px;top:510.7px;font-size:5.6px;transform:scaleX(0.913);transform-origin:0 0;font-family:'DejaVu Sans','Liberation Sans',sans-serif">Ortho</span>
<div class="btn" style="left:363.8px;width:22.5px"></div>
<span class="t " style="left:368.8px;top:510.7px;font-size:5.6px;transform:scaleX(0.900);transform-origin:0 0;font-family:'DejaVu Sans','Liberation Sans',sans-serif">Polar</span>
<div class="btn on" style="left:390px;width:25px"></div>
<span class="t " style="left:395px;top:510.7px;font-size:5.6px;transform:scaleX(0.852);transform-origin:0 0;font-family:'DejaVu Sans','Liberation Sans',sans-serif">ESnap</span>
<div class="btn on" style="left:418.8px;width:26.19999999999999px"></div>
<span class="t " style="left:423px;top:510.7px;font-size:5.6px;transform:scaleX(0.980);transform-origin:0 0;font-family:'DejaVu Sans','Liberation Sans',sans-serif">ETrack</span>
<div class="btn on" style="left:448.8px;width:20.0px"></div>
<span class="t " style="left:453.8px;top:510.7px;font-size:5.6px;transform:scaleX(0.865);transform-origin:0 0;font-family:'DejaVu Sans','Liberation Sans',sans-serif">LWT</span>
<div class="btn on" style="left:472.5px;width:27.5px"></div>
<span class="t " style="left:477px;top:510.7px;font-size:5.6px;transform:scaleX(0.892);transform-origin:0 0;font-family:'DejaVu Sans','Liberation Sans',sans-serif">MODEL</span>
<div class="abs" style="left:360px;top:507px;width:0.6px;height:11px;background:#b0b0b0"></div>
<span class="t " style="left:504.5px;top:509.8px;font-size:6.5px;transform:scaleX(0.954);transform-origin:0 0;font-family:'DejaVu Sans','Liberation Sans',sans-serif">(112629.4422,7104.6655,0.0000)</span>
</body></html>
